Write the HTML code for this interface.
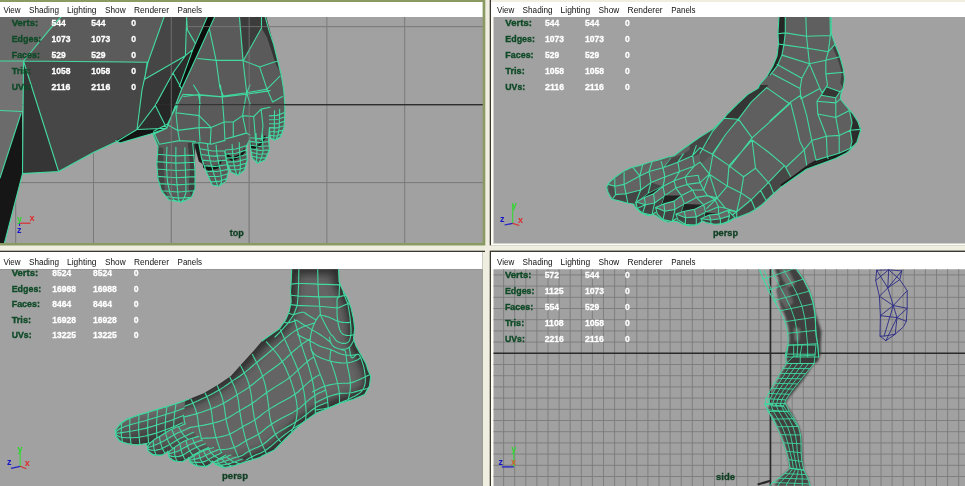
<!DOCTYPE html>
<html><head><meta charset="utf-8"><title>Maya viewports</title>
<style>
html,body{margin:0;padding:0;background:#efeee0;overflow:hidden}
body{width:965px;height:486px}
svg{display:block}
text{font-family:"Liberation Sans",sans-serif}
.m{font-size:9.5px;fill:#111}
.hl{font-size:9.6px;font-weight:bold;fill:#0e4a26;stroke:#0e4a26;stroke-width:0.35}
.hv{font-size:9.6px;font-weight:bold;fill:#fff;stroke:#fff;stroke-width:0.3}
.vl{font-size:9.2px;font-weight:bold;fill:#0f3f22;stroke:#0f3f22;stroke-width:0.3}
.g1{stroke:#7a7a7a;stroke-width:1}
.g2{stroke:#7c7c7c;stroke-width:0.9}
.w{fill:none;stroke:#41d9a0;stroke-width:1.1;stroke-linejoin:round;stroke-linecap:round}
.ax{font-size:9px;font-weight:bold}
</style></head><body>
<svg width="965" height="486" viewBox="0 0 965 486">
<rect width="965" height="486" fill="#efeee0"/>
<rect x="-3" y="0" width="488.3" height="245.5" fill="#8a9a62"/>
<rect x="0" y="2" width="482.6" height="15" fill="#fff"/>
<svg x="0" y="17" width="482.6" height="226" viewBox="0 17 482.6 226">
<rect x="0" y="17" width="483" height="226" fill="#a1a1a1"/>
<line x1="15.7" y1="17" x2="15.7" y2="243" class="g1"/>
<line x1="93.5" y1="17" x2="93.5" y2="243" class="g1"/>
<line x1="171.3" y1="17" x2="171.3" y2="243" class="g1"/>
<line x1="249.1" y1="17" x2="249.1" y2="243" class="g1"/>
<line x1="326.9" y1="17" x2="326.9" y2="243" class="g1"/>
<line x1="404.7" y1="17" x2="404.7" y2="243" class="g1"/>
<line x1="0" y1="26.6" x2="483" y2="26.6" class="g1"/>
<line x1="0" y1="182.6" x2="483" y2="182.6" class="g1"/>
<line x1="0" y1="104.6" x2="483" y2="104.6" stroke="#2e2e2e" stroke-width="1.4"/>
<polygon points="0,16 62,16 23.5,61 0,61" fill="#6a6a6a" />
<polygon points="62,16 164.4,16 147.2,62 23.5,61" fill="#5b5b5b" />
<polygon points="0,61 23.5,61 22.5,111.5 0,110.5" fill="#737373" />
<polygon points="0,110.5 22,111.5 21,113.5 0,178" fill="#6b6b6b" />
<polygon points="22,112 22.5,173.6 4.5,243 0,243 0,178 21,113.5" fill="#161616" />
<polygon points="23.5,61 58.6,171.5 22.5,173.6" fill="#353535" />
<polygon points="23.5,61 148,62.2 142,90 137,129.5 117.3,141.2 93.8,152.3 58.6,171.5" fill="#474747" />
<polygon points="164.4,16 186.7,16 185.4,55.7 144.7,79.2 147.2,62" fill="#464646" />
<polygon points="144.7,79.2 185.4,55.7 173,73 154.6,106.4 156,118 137,129.5 142,90" fill="#3a3a3a" />
<polygon points="186.7,16 207.7,16 192.8,49.6 185.4,55.7" fill="#505050" />
<polygon points="185.4,55.7 192.8,49.6 179.3,86.6 173,73" fill="#2c2c2c" />
<polygon points="173,73 181.7,89 166.7,128.3 155.6,106" fill="#262626" />
<polygon points="137,129.5 155.6,106 166.7,128.3" fill="#2e2e2e" />
<polygon points="116,140.6 137,129.5 166.7,128.3 150.6,134 119.8,143" fill="#141414" />
<polygon points="215,16 195.3,59.4 181.7,89 166.7,128.3 153,134.4 158,146.8 156.8,164 158,178.9 161.7,191.2 169,199.9 181.5,202.3 191.4,197.4 195,188.8 195,171.5 193.8,154.2 192.6,143 198.8,143 201.2,156.7 206.2,171.5 212.3,185 218.5,186.3 226,181.4 228.4,171.5 224.7,151.7 225,151.4 226.7,161.6 231,171.9 237.8,175.3 244.7,170 247.2,160 246.4,146.2 249.8,139.4 250.6,148 252.3,158.2 257.5,163.3 265,160 269.4,149.7 268.6,139.4 269.4,128 270.3,137.7 274.5,140.3 280.5,136.8 284,127.5 284.8,115.5 284.8,103.9 283.6,89 281.1,74.3 277.4,59.4 273.7,44.6 268.8,29.8 265,16" fill="#5a5a5a" />
<polygon points="207.7,16 215,16 195.3,59.4 181.7,89 179.3,86.6 192.8,49.6" fill="#0e0e0e" />
<polygon points="240.2,15.9 261.5,15.9 261.5,28 243.9,59.4" fill="#3c3c3c" />
<polygon points="261.5,15.9 266.1,15.9 270.7,33.5 275.4,52 279.1,70.6 275.4,63.1 267,37.2 261.5,28" fill="#343434" />
<polygon points="193.8,143.1 198.8,143.1 202.5,164.1 198.8,161.6" fill="#1c1c1c" />
<polygon points="202.5,162.8 208.6,167 218.5,164.6 221.5,159.1 221.5,162.1 218,168.5 208.6,171 203.2,167.8" fill="#151515" />
<polygon points="226.4,153 232.1,157.2 240.7,153.7 244.4,148 245.2,151.7 241.2,157.2 232.1,161.1 227.2,157.9" fill="#151515" />
<polygon points="249.8,139.7 252.3,146.2 258.3,144.5 265.1,135.1 266,137.7 259.2,147.1 252.3,149.3 250.1,146.2" fill="#151515" />
<polygon points="187.7,143.1 195.1,143.1 195.1,188.8 191.4,197.4 188.9,188.8 190.1,164.1" fill="#3e3e3e" />
<polygon points="158,146.8 163,148 164.7,188.8 169.1,199.9 161.7,191.2 158,178.9 156.8,164.1" fill="#444" />
<path class="w" d="M0 61 L23.5 61 L148 62.2M62 16 L55.5 22.4 L23.5 61 L58.6 171.5M23.5 61 L22.5 173.6 L4.5 243M0 110.5 L22 111.5M21 113.5 L0 178M22.5 173.6 L58.6 171.5 L93.8 152.3 L117.3 141.2 L137 129.5 L142 90 L148 62.2 L164.4 16M186.7 16 L185.4 55.7 L144.7 79.2M144.7 79.2 L147.2 62M207.7 16 L192.8 49.6 L185.4 55.7 L173 73 L154.6 106.4 L137 129.5M192.8 49.6 L179.3 86.6M173 73 L181.7 89M155.6 106 L166.7 128.3 L137 129.5M116 140.6 L119.8 143 L150.6 134 L166.7 128.3M215 16 L195.3 59.4 L181.7 89 L166.7 128.3 L153 134.4 L158 146.8 L156.8 164 L158 178.9 L161.7 191.2 L169 199.9 L181.5 202.3 L191.4 197.4 L195 188.8 L195 171.5 L193.8 154.2 L192.6 143 L198.8 143 L201.2 156.7 L206.2 171.5 L212.3 185 L218.5 186.3 L226 181.4 L228.4 171.5 L224.7 151.7 L225 151.4 L226.7 161.6 L231 171.9 L237.8 175.3 L244.7 170 L247.2 160 L246.4 146.2 L249.8 139.4 L250.6 148 L252.3 158.2 L257.5 163.3 L265 160 L269.4 149.7 L268.6 139.4 L269.4 128 L270.3 137.7 L274.5 140.3 L280.5 136.8 L284 127.5 L284.8 115.5 L284.8 103.9 L283.6 89 L281.1 74.3 L277.4 59.4 L273.7 44.6 L268.8 29.8 L265 16 L215 16M186.5 15.9 L187.4 29.8 L194.8 42.8M187.4 29.8 L193.9 40.9M209.6 29.8 L216.1 60.4 L219.8 87.2 L223.5 96.5M197.6 58.5 L216.1 60.4 L243 60.4 L259.6 66.9 L273.5 62.2 L277.2 61.3M239.3 15.9 L243 60.4 L246.7 92.8 L250.4 105M261.5 15.9 L261.5 28 L243.9 59.4M259.6 66.9 L267 89.1 L246.7 92.8 L219.8 96.5 L198.5 94.6 L183.7 96.5M267 89.1 L280 76.1M267 89.1 L272.6 102 L282.4 96.5M198.5 94.6 L200.4 105M183.3 94.3 L200 95.2 L222.2 97 L246.3 94.3 L270 90.6M183.3 94.3 L177.8 103.5 L172.2 114.6 L167.6 123.9 L153.7 131.3M175.9 112.8 L199.1 115.6 L211.1 127.6 L224.1 122 L233.3 122 L242.6 115.6 L253.7 116.5 L261.1 109.1 L270 107.2M167.6 124.8 L177.8 130.4 L199.1 127.6 L211.1 127.6M177.8 130.4 L179.6 140.6M153.7 132.2 L159.3 144.3 L179.6 140.6 L195.4 141.5M199.1 142.4 L211.1 144.3 L224.1 140.6M225.9 138.7 L233.3 136.9 L246.3 133.1 L250 135M200 95.2 L199.1 115.6 L199.1 127.6 L200 140.6M222.2 97 L224.1 122 L225 140.6M246.3 94.3 L242.6 115.6 L246.3 133.1M211.1 127.6 L210.2 144.3M233.3 122 L233.3 136.9M253.7 116.5 L255.6 140.6M261.1 109.1 L263 125.7 L261.1 140.6M177.8 103.5 L175.9 112.8 L177.8 130.4M193.5 85 L200 95.2M220.4 85 L222.2 97M250 85 L246.3 94.3M157.484 154.202 L175.824 155.877 L194.165 155.153M156.967 161.604 L175.749 163.155 L194.531 162.306M157.203 169.002 L176.049 170.43 L194.896 169.459M157.798 176.398 L176.399 177.708 L195 176.619M159.414 183.601 L177.207 184.891 L195 183.781M161.552 190.707 L177.862 191.942 L194.172 190.777M166.138 196.49 L178.773 198.137 L191.407 197.384M166.95 147.1 L166.5 159.756 L166.648 170.91 L167.605 182.014 L169.801 192.772 L173.75 199.925 L178.5 201.5M175.9 147.4 L175.785 159.962 L176.069 171.021 L176.737 182.052 L177.851 192.783 L178.5 199.95 L180 201.5M184.85 147.7 L185.07 160.167 L185.489 171.133 L185.868 182.091 L185.901 192.794 L183.25 199.975 L181.5 201.5M199.807 148.747 L212.442 150.934 L225.078 150.72M200.814 154.495 L213.134 156.167 L225.455 155.44M202.351 160.107 L214.309 161.305 L226.268 160.103M204.218 165.635 L215.678 166.396 L227.138 164.757M206.086 171.162 L217.048 171.487 L228.009 169.411M208.456 176.492 L218.12 176.465 L227.785 174.037M210.858 181.81 L218.764 181.424 L226.669 178.639M207.433 144 L208.645 153.715 L210.385 161.815 L212.718 169.775 L214.997 177.58 L216.867 183.8 L217.5 185.5M216.067 145 L216.959 154.195 L218.343 161.802 L220.172 169.319 L221.347 176.743 L221.433 182.6 L219.5 185.5M225.29 150.06 L235.894 148.951 L246.499 145.443M225.655 154.112 L236.126 153.198 L246.597 149.885M226.218 158.143 L236.538 157.432 L246.859 154.321M226.923 162.135 L237.024 161.646 L247.125 158.757M228.491 165.89 L237.458 165.696 L246.424 163.102M230.059 169.646 L237.703 169.73 L245.347 167.413M232.133 144.333 L232.432 151.361 L232.931 156.869 L233.612 162.349 L234.661 167.565 L235.567 171.267 L236.8 174.5M239.267 142.667 L239.481 149.862 L239.847 155.547 L240.363 161.214 L240.392 166.687 L240.133 170.633 L238.8 174.5M249.964 137.688 L259.366 138.658 L268.769 137.227M250.128 141.376 L259.533 142.615 L268.938 141.454M250.365 145.06 L259.762 146.569 L269.16 145.678M250.722 148.732 L260.021 150.509 L269.321 149.885M251.329 152.374 L259.494 154.275 L267.659 153.776M251.936 156.015 L258.966 158.04 L265.997 157.666M256.067 133.667 L256.285 140.272 L256.529 145.376 L256.928 150.467 L256.73 155.384 L256.533 158.8 L257 162.5M262.333 133.333 L262.554 140.176 L262.799 145.517 L263.157 150.849 L261.962 155.874 L260.767 159.4 L259 162.5M269.4 115.9 L277.009 115.38 L284.617 112.459M269.4 119.801 L276.917 119.559 L284.434 116.918M269.4 123.701 L276.826 123.739 L284.251 121.377M269.4 127.601 L276.734 127.918 L284.068 125.835M269.723 131.486 L276.369 132.002 L283.015 130.117M270.084 135.37 L275.763 136.032 L281.443 134.294M274.533 110.667 L274.453 117.561 L274.372 122.955 L274.292 128.349 L274.075 133.645 L273.7 137.4 L274 139.5M279.667 109.333 L279.506 116.473 L279.345 122.113 L279.184 127.753 L278.325 133.216 L277.1 137.1 L276 139.5" />
<line x1="156" y1="104.6" x2="483" y2="104.6" stroke="#2e2e2e" stroke-width="1.4" opacity="0.85"/>
<line x1="171.3" y1="17" x2="171.3" y2="243" stroke="#808080" stroke-width="1" opacity="0.7"/>
<line x1="249.2" y1="17" x2="249.2" y2="243" stroke="#808080" stroke-width="1" opacity="0.7"/>
<line x1="186" y1="26.6" x2="483" y2="26.6" stroke="#808080" stroke-width="1" opacity="0.7"/>
</svg>
<rect x="489.7" y="0" width="475.3" height="245.6" fill="#3a3830"/>
<rect x="491" y="0" width="474" height="2" fill="#efeee0"/>
<rect x="491" y="2" width="474" height="243.6" fill="#fdfdf4"/>
<rect x="491" y="2" width="474" height="15" fill="#fff"/>
<svg x="493.5" y="17" width="471.5" height="226.5" viewBox="493.5 17 471.5 226.5">
<rect x="491" y="17" width="474" height="227" fill="#a1a1a1"/>
<defs><clipPath id="clipTR"><polygon points="779,16 778,33 778.5,44 777,56 772.8,66.2 766.8,76.5 760,84.2 758,88.4 747.8,94.4 737.6,103.8 727.3,114 723.9,118.3 713.7,128.6 700,137 684,148.3 674,155.7 667.9,157 658.6,160 649.4,162.3 640,165.4 630.9,167.7 623,171.6 615.4,177 609.3,182.4 606.5,187 607.7,191.7 610,196.3 612.3,199.4 620,201 627.8,203.2 633.2,204 636.3,208.6 641.7,213.3 647.8,215.6 653.2,214.5 656.3,216 661.7,219.8 667.9,222.3 673,221.3 677,221.6 683,224.4 690,226 698,224.4 702.5,221 707,222.9 715,224.4 724,223.6 730,221.3 734,218.2 739.5,216.7 750,212.8 754.6,210 762,205 771.9,195.2 781.7,186.6 794,178 806.4,169.3 816.3,165.6 826,162 836,158.2 848.4,152 857,142 860.7,129.8 858,122 853,114 846,106 840.3,99 841,93.6 843.3,87.6 844.5,79 843.3,68.8 840,56.8 835,44 831.4,33.8 831,16"/></clipPath></defs>
<polygon points="779,16 778,33 778.5,44 777,56 772.8,66.2 766.8,76.5 760,84.2 758,88.4 747.8,94.4 737.6,103.8 727.3,114 723.9,118.3 713.7,128.6 700,137 684,148.3 674,155.7 667.9,157 658.6,160 649.4,162.3 640,165.4 630.9,167.7 623,171.6 615.4,177 609.3,182.4 606.5,187 607.7,191.7 610,196.3 612.3,199.4 620,201 627.8,203.2 633.2,204 636.3,208.6 641.7,213.3 647.8,215.6 653.2,214.5 656.3,216 661.7,219.8 667.9,222.3 673,221.3 677,221.6 683,224.4 690,226 698,224.4 702.5,221 707,222.9 715,224.4 724,223.6 730,221.3 734,218.2 739.5,216.7 750,212.8 754.6,210 762,205 771.9,195.2 781.7,186.6 794,178 806.4,169.3 816.3,165.6 826,162 836,158.2 848.4,152 857,142 860.7,129.8 858,122 853,114 846,106 840.3,99 841,93.6 843.3,87.6 844.5,79 843.3,68.8 840,56.8 835,44 831.4,33.8 831,16" fill="#5f5f5f" />
<g clip-path="url(#clipTR)">
<polygon points="777.1,15 777.9,33.8 778.4,44 777.1,56 772.8,66.2 766.8,76.5 770.2,74.8 777.1,66.2 781.9,55.1 783.9,44.9 785.3,32.9 785.3,15" fill="#262626" />
<polygon points="758.9,85 758.1,88.4 747.8,94.4 737.6,103.8 727.3,114 723.9,118.3 738.4,119.2 751.2,102.1 766.6,87.6 768.3,85" fill="#353535" />
<polygon points="723.9,118.3 713.7,128.6 700,137.1 689.8,144.8 689.8,158.4 700,153.3 712.8,131.1" fill="#454545" />
<polygon points="723.9,118.3 712.8,131.1 700,153.3 700,165.3 712.8,153.3 725.6,134.5 738.4,119.2" fill="#545454" />
<polygon points="826.4,86.7 840,91.8 835.8,97.8 821.2,95.2" fill="#363636" />
<polygon points="835.1,44 839.9,56.8 843.3,68.8 844.5,79 843.3,87.6 840.3,83.3 841.6,73.1 839.4,64.5 836,55.1 832.6,47.5" fill="#404040" />
<polygon points="841.7,83.3 845.1,91.8 850.3,103.8 855.4,114 859.7,124.3 862.2,131.1 859.7,137.9 855.4,144.8 850.3,148.2 852,141.4 850.3,130.3 852,122.6 849.4,110.6 845.1,95.2" fill="#3a3a3a" />
<polygon points="852,122.6 855.4,114 859.7,124.3 862.2,131.1 859.7,137.9 855.4,144.8 850.3,148.2 852,141.4 850.3,130.3" fill="#2c2c2c" />
<polygon points="862.2,136.2 855.4,144.8 846.9,151.6 838.3,155.9 828.1,158.4 817.8,161.9 809.3,165.3 804.2,168 795.6,175.5 806.7,165.3 816.1,160.1 827.2,156.7 839.2,153.3 850.3,148.2 855.4,144.8" fill="#1e1e1e" />
<polygon points="784.5,165.6 790.5,176.2 773.8,193.8 765.8,200.1 755,208.7 736.7,217.7 725.6,225.4 725.6,220.3 736.7,211.7 751.2,199.8 768.3,182.7" fill="#474747" />
<polygon points="781.7,186.6 794.1,178 806.4,169.3 816.3,165.6 826.2,161.9 836,158.2 848.4,152 844.7,152 832.3,157 822.5,160.4 812.6,163.9 804,167.8 792.8,176 780.5,184.6" fill="#1c1c1c" />
<polygon points="711.1,140 703.7,147.4 692.6,155.7 677.8,162.2 663,167.8 661.1,161.3 670.4,158.5 683.3,153.9 696.3,145.6 703.7,140" fill="#474747" />
<path class="w" d="M785.3 15.9 L785.3 32.9 L783.9 44.9 L781.9 55.1 L777.1 66.2 L770.2 74.8M805.8 15.9 L806.5 36.3 L807.8 48.3 L809.5 63.7 L801.8 78.2 L800.1 88.4 L801 98.7M809.5 63.7 L819.8 88.4 L822.3 92.7M819.8 88.4 L801 98.7M830 15.9 L830.4 35.5 L828.3 51.7 L825.8 60.3 L825.8 73.9 L827.5 85 L822.3 92.7M777.9 33.8 L785.3 32.9 L806.5 36.3 L830.4 35.5M778.4 44 L783.9 44.9 L807.8 48.3 L828.3 51.7 L835.1 44.4M781.9 55.1 L809.5 63.7 L825.8 60.3 L839.9 56.8M777.1 64.5 L801.8 78.2M772.8 73.9 L800.1 88.4M825.8 73.9 L843.7 72.2M826.4 86.7 L821.2 95.2 L817 101.2 L817.8 114 L826.4 136.2 L827.2 156.7 L828.1 158.4M826.4 86.7 L840 91.8 L835.8 97.8 L821.2 95.2M840 91.8 L843.8 88.4M817 101.2 L835.8 102.9 L835.8 97.8M835.8 102.9 L845.1 95.2M817.8 114 L835.8 117.5 L835.8 102.9M835.8 117.5 L849.4 110.6M835.8 117.5 L839.2 135.4 L839.2 153.3M811.8 140.5 L826.4 136.2 L839.2 135.4 L850.3 130.3 L860.5 129.4M845.1 95.2 L849.4 110.6 L852 122.6 L850.3 130.3 L852 141.4 L850.3 148.2M800.7 95.2 L806.7 115.7 L811.8 140.5 L816.1 160.1M800.7 95.2 L790.5 102.1 L770 120.9M790.5 102.1 L795.6 122.6 L799.9 141.4 L804.2 149.9 L806.7 165.3M811.8 140.5 L804.2 149.9 L786.2 167M816.1 160.1 L827.2 156.7 L839.2 153.3 L850.3 148.2 L855.4 144.8M766.6 87.6 L751.2 102.1 L738.4 119.2 L725.6 134.5 L712.8 153.3M738.4 119.2 L723.9 118.3M723.9 118.3 L712.8 131.1 L700 153.3M738.4 119.2 L752.1 137.9M766.6 87.6 L789.7 103.8M789.7 103.8 L752.1 137.9M752.1 137.9 L729 168M752.1 140 L755.5 168.2 L743.6 176.7 L729 165.6 L752.1 140M752.1 140 L768.3 152 L784.5 165.6 L790.5 176.2M755.5 168.2 L770 184.4 L773.8 193.8M784.5 165.6 L768.3 182.7 L751.2 199.8 L736.7 211.7 L725.6 220.3M760.6 190.4 L765.8 200.1M751.2 199.8 L755 208.7M736.7 211.7 L736.7 217.7M743.6 176.7 L741 192.9 L751.2 199.8M741 192.9 L736.7 211.7M729 165.6 L727.3 186.1 L741 192.9M727.3 186.1 L717.1 198.1 L725.6 208.3 L736.7 211.7M614.8 186.3 L624.1 184.4 L639.8 176.1 L649.1 171.5 L663 167.8 L677.8 162.2 L692.6 155.7 L700 147.6M615.7 194.6 L625.9 193.7 L640.7 190 L650.9 182.6 L664.8 177 L679.6 171.5 L694.4 165.9 L700 162.2M663 186.3 L674.1 180.7 L685.2 177 L698.1 175.2M664.8 195.6 L675.9 188.1 L687 184.4 L700 182.6M681.5 195.6 L692.6 190 L703.7 190 L709.4 174.3M684.3 203.9 L696.3 197.4 L707.4 195.6 L717 198M703.7 204.8 L714.8 199.3 L717 198M705.6 212.2 L718.5 206.7 L725.6 208.3M718.5 214.1 L727.8 210.4 L736.7 211.7M670.4 158.5 L663 167.8 L664.8 177 L663 186.3M683.3 153.9 L677.8 162.2 L679.6 171.5 L674.1 180.7 L675.9 188.1 L681.5 195.6M696.3 145.6 L692.6 155.7 L694.4 165.9 L685.2 177 L687 184.4 L692.6 190 L696.3 197.4 L703.7 204.8M698.1 175.2 L700 182.6 L703.7 190 L707.4 195.6 L714.8 199.3 L718.5 206.7 L718.5 214.1M729 165.6 L712.8 154.5 L700 147.7M712.8 154.5 L722.2 140M712.8 154.5 L709.4 174.2 L727.3 186.1M700 162.2 L709.4 174.2 L700 182.7M709.4 174.2 L717.1 198.1 L706.8 208.3" />
<polygon points="670.4,158.5 661.1,161.3 651.9,162.2 642.6,165 633.3,167.8 624.1,172.4 614.8,178.9 608.3,184.4 608.9,191.9 613,198.3 618.5,201.1 627.8,203 635.2,203.9 648.1,193.7 663,186.3 664.8,177 663,167.8" fill="#636363" />
<polygon points="615.7,194.6 625.9,193.7 640.7,190 650.9,182.6 663,186.3 648.1,193.7 635.2,203.9 627.8,203 618.5,201.1 613,198.3" fill="#454545" />
<polygon points="608.3,184.4 614.8,186.3 615.7,194.6 613,198.3 608.9,191.9" fill="#4c4c4c" />
<polygon points="639.8,176.1 649.1,171.5 650.9,182.6 640.7,190" fill="#585858" />
<path class="w" d="M614.8 186.3 L624.1 184.4 L639.8 176.1 L649.1 171.5 L663 167.8M615.7 194.6 L625.9 193.7 L640.7 190 L650.9 182.6 L664.8 177M624.1 172.4 L624.1 184.4 L625.9 193.7 L627.8 203M633.3 167.8 L639.8 176.1 L640.7 190 L635.2 203.9M642.6 165 L639.8 176.1M651.9 162.2 L649.1 171.5 L650.9 182.6 L648.1 193.7 L635.2 203.9M614.8 178.9 L614.8 186.3 L615.7 194.6 L613 198.3M608.3 184.4 L614.8 186.3M661.1 161.3 L663 167.8 L664.8 177 L663 186.3 L648.1 193.7" />
<polygon points="635.2,203.9 648.1,193.7 663,186.3 653.7,193.7 644.4,197.4 636.1,202" fill="#222" />
<polygon points="636.1,202 644.4,197.4 653.7,193.7 663,186.3 664.8,195.6 661.1,206.7 655.6,212.2 651.9,215 642.6,213.1 637,208.5" fill="#444" />
<polygon points="636.1,202 644.4,197.4 653.7,193.7 663,186.3 664.8,195.6 654.6,203 645.4,204.8" fill="#666" />
<path class="w" d="M636.1 202 L644.4 197.4 L653.7 193.7 L663 186.3 L664.8 195.6 L661.1 206.7 L655.6 212.2 L651.9 215 L642.6 213.1 L637 208.5 L636.1 202M644.4 197.4 L645.4 204.8 L642.6 213.1M653.7 193.7 L654.6 203 L651.9 215M636.1 202 L645.4 204.8 L654.6 203 L664.8 195.6M637 208.5 L645.4 204.8" />
<polygon points="655.6,212.2 661.1,206.7 664.8,195.6 681.5,195.6 674.1,201.1 663.9,203.9 655.6,207.6" fill="#222" />
<polygon points="655.6,207.6 663.9,203.9 674.1,201.1 681.5,195.6 684.3,203.9 681.5,212.2 675.9,218.7 672.2,221.5 663,219.6 657.4,214.1" fill="#444" />
<polygon points="655.6,207.6 663.9,203.9 674.1,201.1 681.5,195.6 684.3,203.9 675,209.4 664.8,211.3" fill="#666" />
<path class="w" d="M655.6 207.6 L663.9 203.9 L674.1 201.1 L681.5 195.6 L684.3 203.9 L681.5 212.2 L675.9 218.7 L672.2 221.5 L663 219.6 L657.4 214.1 L655.6 207.6M663.9 203.9 L664.8 211.3 L663 219.6M674.1 201.1 L675 209.4 L672.2 221.5M655.6 207.6 L664.8 211.3 L675 209.4 L684.3 203.9" />
<polygon points="675.9,218.7 681.5,212.2 684.3,203.9 703.7,204.8 694.4,209.4 684.3,211.3 675.9,214.1" fill="#222" />
<polygon points="675.9,214.1 684.3,211.3 694.4,209.4 703.7,204.8 705.6,212.2 703.7,219.6 700.9,222.4 696.3,225.2 685.2,224.3 677.8,219.6" fill="#444" />
<polygon points="675.9,214.1 684.3,211.3 694.4,209.4 703.7,204.8 705.6,212.2 696.3,216.9 685.6,217.8" fill="#666" />
<path class="w" d="M675.9 214.1 L684.3 211.3 L694.4 209.4 L703.7 204.8 L705.6 212.2 L703.7 219.6 L700.9 222.4 L696.3 225.2 L685.2 224.3 L677.8 219.6 L675.9 214.1M684.3 211.3 L685.6 217.8 L685.2 224.3M694.4 209.4 L696.3 216.9 L696.3 225.2M675.9 214.1 L685.6 217.8 L696.3 216.9 L705.6 212.2" />
<polygon points="700.9,222.4 703.7,219.6 705.6,212.2 718.5,214.1 709.3,215 700.9,218.7" fill="#222" />
<polygon points="700.9,218.7 709.3,215 718.5,214.1 727.8,210.4 735.2,217.8 727.8,221.5 720.4,224.3 711.1,225.2 702.8,223.3" fill="#444" />
<polygon points="700.9,218.7 709.3,215 718.5,214.1 727.8,210.4 729.6,215.9 720.4,218.7 710.7,220" fill="#666" />
<path class="w" d="M700.9 218.7 L709.3 215 L718.5 214.1 L727.8 210.4 L735.2 217.8 L727.8 221.5 L720.4 224.3 L711.1 225.2 L702.8 223.3 L700.9 218.7M709.3 215 L710.7 220 L711.1 225.2M718.5 214.1 L720.4 218.7 L720.4 224.3M700.9 218.7 L710.7 220 L720.4 218.7 L729.6 215.9M727.8 210.4 L729.6 215.9 L727.8 221.5" />
</g>
<path class="w" d="M779 16 L778 33 L778.5 44 L777 56 L772.8 66.2 L766.8 76.5 L760 84.2 L758 88.4 L747.8 94.4 L737.6 103.8 L727.3 114 L723.9 118.3 L713.7 128.6 L700 137 L684 148.3 L674 155.7 L667.9 157 L658.6 160 L649.4 162.3 L640 165.4 L630.9 167.7 L623 171.6 L615.4 177 L609.3 182.4 L606.5 187 L607.7 191.7 L610 196.3 L612.3 199.4 L620 201 L627.8 203.2 L633.2 204 L636.3 208.6 L641.7 213.3 L647.8 215.6 L653.2 214.5 L656.3 216 L661.7 219.8 L667.9 222.3 L673 221.3 L677 221.6 L683 224.4 L690 226 L698 224.4 L702.5 221 L707 222.9 L715 224.4 L724 223.6 L730 221.3 L734 218.2 L739.5 216.7 L750 212.8 L754.6 210 L762 205 L771.9 195.2 L781.7 186.6 L794 178 L806.4 169.3 L816.3 165.6 L826 162 L836 158.2 L848.4 152 L857 142 L860.7 129.8 L858 122 L853 114 L846 106 L840.3 99 L841 93.6 L843.3 87.6 L844.5 79 L843.3 68.8 L840 56.8 L835 44 L831.4 33.8 L831 16 L779 16" />
</svg>
<rect x="485.3" y="245.6" width="480" height="5" fill="#efeee0"/>
<rect x="0" y="250.7" width="485" height="235.4" fill="#3a3830"/>
<rect x="482.5" y="252" width="3" height="234" fill="#efeee0"/>
<rect x="0" y="252" width="482.5" height="17.3" fill="#fff"/>
<svg x="0" y="269.3" width="482.5" height="216.7" viewBox="0 269.3 482.5 216.7">
<rect x="0" y="269" width="483" height="217" fill="#a1a1a1"/>
<defs><clipPath id="clipBL"><polygon points="291.7,268 291.2,281.8 290.5,291.7 291.2,301.6 289.3,311.4 285.6,320 279.4,328.7 270.7,334.9 262,341 253.5,351 242.3,363.3 230.9,375.9 218.5,384.5 203.7,393.2 188.9,399.3 174,404.3 161.7,408 149.4,411.7 137,415.4 127.2,419 119.8,424 115.3,430.2 116,436.4 119.8,441.3 127.2,443.8 137,445 145.7,443.8 146.9,445 148.1,451.2 153,454.9 161.7,455.4 166.7,452.4 167.9,451.2 169.1,457.4 174,461 182.7,461.8 187.7,458.6 188.9,457.4 190.1,462.3 196.3,466 206.2,466.7 211.1,463.5 212.3,461 216,464.8 223.5,467.7 233.3,466 240.7,463.5 248.1,461 260,457.4 262,456 274.4,450 284.3,440 294.2,430.2 304,421.6 316.4,413 328.8,408 341,403 353.5,399.3 364.6,394.4 369.5,385.8 370.7,375.9 368.3,371 365.8,363.3 360.9,354.7 356,346 353.5,338.6 354.7,328.7 353.5,318.9 351,307.7 347.3,297.9 342.3,289.2 339.1,281.8 338.6,268"/></clipPath><filter id="blBL" x="-20%" y="-20%" width="140%" height="140%"><feGaussianBlur stdDeviation="4"/></filter></defs>
<g clip-path="url(#clipBL)">
<polygon points="291.7,268 291.2,281.8 290.5,291.7 291.2,301.6 289.3,311.4 285.6,320 279.4,328.7 270.7,334.9 262,341 253.5,351 242.3,363.3 230.9,375.9 218.5,384.5 203.7,393.2 188.9,399.3 174,404.3 161.7,408 149.4,411.7 137,415.4 127.2,419 119.8,424 115.3,430.2 116,436.4 119.8,441.3 127.2,443.8 137,445 145.7,443.8 146.9,445 148.1,451.2 153,454.9 161.7,455.4 166.7,452.4 167.9,451.2 169.1,457.4 174,461 182.7,461.8 187.7,458.6 188.9,457.4 190.1,462.3 196.3,466 206.2,466.7 211.1,463.5 212.3,461 216,464.8 223.5,467.7 233.3,466 240.7,463.5 248.1,461 260,457.4 262,456 274.4,450 284.3,440 294.2,430.2 304,421.6 316.4,413 328.8,408 341,403 353.5,399.3 364.6,394.4 369.5,385.8 370.7,375.9 368.3,371 365.8,363.3 360.9,354.7 356,346 353.5,338.6 354.7,328.7 353.5,318.9 351,307.7 347.3,297.9 342.3,289.2 339.1,281.8 338.6,268" fill="#646464" />
<polygon points="291.7,268 291.2,281.8 290.5,291.7 291.2,301.6 289.3,311.4 285.6,320 279.4,328.7 270.7,334.9 262,341 253.5,351 242.3,363.3 230.9,375.9 218.5,384.5 203.7,393.2 188.9,399.3 174,404.3 161.7,408 149.4,411.7 137,415.4 127.2,419 119.8,424 115.3,430.2 116,436.4 119.8,441.3 127.2,443.8 137,445 145.7,443.8 146.9,445 148.1,451.2 153,454.9 161.7,455.4 166.7,452.4 167.9,451.2 169.1,457.4 174,461 182.7,461.8 187.7,458.6 188.9,457.4 190.1,462.3 196.3,466 206.2,466.7 211.1,463.5 212.3,461 216,464.8 223.5,467.7 233.3,466 240.7,463.5 248.1,461 260,457.4 262,456 274.4,450 284.3,440 294.2,430.2 304,421.6 316.4,413 328.8,408 341,403 353.5,399.3 364.6,394.4 369.5,385.8 370.7,375.9 368.3,371 365.8,363.3 360.9,354.7 356,346 353.5,338.6 354.7,328.7 353.5,318.9 351,307.7 347.3,297.9 342.3,289.2 339.1,281.8 338.6,268" fill="none" stroke="#2b2b2b" stroke-width="12" filter="url(#blBL)"/>
<polygon points="137,445 145.7,443.8 166.7,452.4 187.7,458.6 211.1,463.5 238.3,464.8 238.3,474.6 134.6,464.8" fill="#2b2b2b" opacity="0.6" filter="url(#blBL)"/>
</g>
<g clip-path="url(#clipBL)">
<path class="w" d="M298.9 267.9 L298.6 284.1 L298.1 296 L297.2 305.4 L293.8 314.8 L287.8 323.4 L280.1 331.9 L275 337M317.7 267.9 L318 284.1 L318.6 296.9 L319.1 298.8 L319.8 307.4 L320.4 314.2M339 267.9 L339.6 284.1 L339 296.9 L337 298.8 L337 299.3 L337 300.4 L337 302 L337 304.2 L337 306.3 L337 308.5 L337 310.6 L337 312.8 L337.1 314.9 L337.2 317.1 L337.5 319.3 L337.8 321.4 L338.2 323.5 L338.6 325.3 L339 327 L339.4 328.6 L339.9 330 L340.5 331.2 L341 332.3 L341.7 333.2 L342.6 334 L343.7 334.6 L345.1 335.1 L346.9 335.4 L348.4 335.5 L349.9 335.5 L351.2 335.4 L352.3 335.1 L353.2 334.8 L353.8 334.7 L354.1 334.6M343.7 284.1 L343.3 292.6 L346.7 301.2 L347.5 302.5 L347.6 303.1 L347.9 304.3 L348.2 306.2 L348.7 308.6 L349.1 311.1 L349.5 313.5 L349.9 316 L350.1 318.5 L350.4 321 L350.6 323.4 L350.8 325.9 L351 328.4 L351 330.6 L351 332.4 L351 333.9 L350.8 335.2 L350.6 336.4 L350.3 337.7 L349.9 339.1 L349.5 340.5 L348.7 341.6 L347.6 342.5 L346.3 343.1 L344.5 343.4 L342.9 343.4 L341.3 343.1 L339.7 342.6 L338.1 341.9 L336.8 341 L335.7 340.1 L334.9 339.1 L334.2 338 L333.6 337.1 L333 336.3 L332.4 335.7 L331.8 335.3 L331.4 334.9 L331 334.7 L330.9 334.6M354.3 339.5 L354.2 339.6 L354.1 339.9 L353.9 340.2 L353.6 340.7 L353.1 341.5 L352.5 342.5 L351.7 343.9 L350.8 345.6 L349.6 347 L348.2 348 L346.6 348.8 L344.8 349.3 L342.8 349.4 L340.8 349.3 L338.7 348.8 L336.6 348.1 L334.7 347.2 L333.3 346.2 L332.1 345.1 L331.4 343.8 L330.7 342.6 L330.3 341.4 L330 340.1 L329.8 338.9 L329.7 337.9 L329.6 337.3 L329.6 337M291.7 284.1 L298.6 283.2 L318 284.1 L339.6 284.9 L343.7 284.1M291.2 295.2 L298.1 296 L318.6 296.9 L339 296.9 L345 295.2 L348.1 295.7M290.4 304.6 L297.2 305.4 L319.1 306.3 L337.9 308 L347.6 303.7 L351.3 303.7M287.8 313.1 L288.2 313.2 L288.9 313.4 L290.1 313.7 L291.6 314.2 L293.3 314.3 L295.2 314.1 L297.3 313.5 L299.7 312.7 L301.7 312.2 L303.4 312.2 L304.8 312.7 L305.8 313.5 L307.1 314.5 L308.7 315.5 L310.6 316.7 L312.8 317.9 L314.4 318.9 L315.5 319.5 L316 319.8M282.7 321.7 L283 321.8 L283.7 322 L284.6 322.3 L285.9 322.8 L287.4 322.9 L289.2 322.6 L291.3 322.1 L293.7 321.2 L295.5 320.6 L296.7 320.3 L297.3 320.3 L297.4 320.6 L298.3 321.3 L300.1 322.5 L302.8 324.2 L306.4 326.4 L309.7 328.4 L312.8 330.2 L315.6 331.9 L318.3 333.5 L320.7 335 L323 336.6 L325.2 338.1 L327.2 339.7 L328.7 340.8 L329.7 341.6 L330.2 342M320.4 314.8 L321 315 L322.1 315.3 L323.8 315.7 L326.2 316.4 L328.4 317.1 L330.7 317.9 L332.9 318.9 L335 320 L337.2 320.9 L339.4 321.6 L341.5 322.1 L343.7 322.4 L345.5 322.5 L347.1 322.6 L348.3 322.6 L349.2 322.4 L349.9 322.3 L350.4 322.2 L350.6 322.2M320.4 314.8 L320.7 315.4 L321.3 316.7 L322.2 318.5 L323.5 321 L324.7 323.5 L326 325.9 L327.4 328.4 L328.8 330.9 L329.9 332.7 L330.5 334 L330.9 334.6M297.5 334.6 L298.3 335 L299.8 335.7 L302.1 336.9 L305.2 338.4 L308.3 339.9 L311.2 341.5 L314.1 343 L316.8 344.6 L319.5 345.9 L322.2 347 L324.7 347.8 L327.2 348.5 L329.7 349.2 L332.1 350.2 L334.6 351.2 L337 352.5 L339.4 353.5 L341.7 354.2 L344 354.8 L346.1 355.1 L348.3 355.3 L350.5 355.3 L352.6 355.1 L354.8 354.8 L356.4 354.5 L357.5 354.4 L358 354.3M311.1 350 L311.4 350.4 L312 351.2 L312.9 352.3 L314.2 353.9 L316 355.4 L318.5 356.8 L321.6 358.3 L325.3 359.6 L329.1 360.8 L333 361.7 L336.9 362.4 L340.9 362.9 L344.6 363 L348 362.8 L351.1 362.2 L353.8 361.3 L356.1 360.4 L357.8 359.7 L358.9 359 L359.6 358.3 L360 357.9 L360.3 357.6 L360.5 357.4M330.9 349.4 L330.8 350.1 L330.7 351.4 L330.4 353.4 L330.1 356 L329.9 358.1 L329.9 359.7 L330.1 360.6 L330.4 361.1 L330.9 362 L331.5 363.6 L332.3 365.6 L333.2 368.3 L334.1 370.9 L334.9 373.6 L335.8 376.4 L336.5 379.1 L337.2 381.8 L337.8 384.5 L338.4 387 L338.8 389.5 L339.2 392 L339.4 394.4 L339.5 396.9 L339.5 399.4 L339.5 401.2 L339.5 402.5 L339.5 403.1M342 350 L342.2 350 L342.7 350 L343.4 350 L344.3 350 L345.1 350.9 L345.7 352.5 L346.1 355.1 L346.4 358.5 L346.8 361.7 L347.3 364.8 L347.8 367.8 L348.5 370.5 L349 373.2 L349.5 375.6 L349.9 377.9 L350.1 380.1 L350.3 382.3 L350.4 384.6 L350.4 387 L350.2 389.5 L350 391.7 L349.7 393.7 L349.3 395.5 L348.8 397.1 L348.5 398.2 L348.2 399 L348.1 399.4M349.4 348.1 L349.5 348.8 L349.7 350.3 L350.1 352.6 L350.5 355.5 L351.3 357.3 L352.4 357.9 L353.7 357.2 L355.5 355.3 L357 354.4 L358.3 354.4 L359.4 355.3 L360.3 357.1 L361.2 359 L361.9 361 L362.6 363.1 L363.3 365.3 L363.8 367.4 L364.3 369.6 L364.6 371.8 L364.9 373.9 L365.2 376 L365.3 378 L365.3 380 L365.3 381.8 L365 383.7 L364.6 385.5 L363.9 387.4 L363 389.2 L362 390.8 L360.8 392.2 L359.4 393.4 L357.9 394.3 L356.7 395 L356 395.5 L355.6 395.7M312.3 392 L313.1 391.6 L314.6 390.8 L316.9 389.7 L320.1 388.1 L323.2 386.8 L326.4 385.7 L329.6 384.9 L332.8 384.2 L336.1 383.8 L339.3 383.5 L342.5 383.3 L345.8 383.3 L348.7 383.1 L351.4 382.6 L353.9 381.9 L356 381 L358.3 380 L360.7 378.9 L363.2 377.8 L365.9 376.5 L367.8 375.6 L369.1 375 L369.8 374.7M314.8 403.1 L315.6 402.7 L317.1 401.9 L319.4 400.8 L322.6 399.2 L325.6 397.8 L328.7 396.6 L331.8 395.5 L334.9 394.6 L337.9 393.9 L340.7 393.4 L343.4 393.2 L346.1 393.2 L348.6 393 L351.1 392.7 L353.5 392.3 L355.8 391.6 L358.1 391 L360.3 390.4 L362.5 389.8 L364.7 389.2 L366.3 388.8 L367.4 388.5 L367.9 388.3M316 410 L316.8 409.9 L318.3 409.6 L320.6 409.2 L323.8 408.8 L326.8 408.1 L329.7 407.2 L332.6 406.2 L335.3 404.9 L338 403.8 L340.4 402.7 L342.7 401.7 L344.9 400.8 L347 399.9 L349 398.9 L350.9 398 L352.8 397.1 L354.2 396.4 L355.1 395.9 L355.6 395.7M320.4 314.2 L320.1 314.5 L319.6 315.2 L318.8 316.3 L317.6 317.7 L316.6 319.4 L315.5 321.3 L314.4 323.5 L313.3 325.9 L312.4 328.5 L311.6 331.1 L311 333.8 L310.6 336.5 L310.3 339 L310.1 341.2 L310.1 343 L310.3 344.6 L310.7 346.6 L311.3 349 L312.1 351.8 L313.2 355.1 L314.4 358.5 L315.6 362 L316.9 365.6 L318.4 369.4 L319.7 372.9 L320.9 376.1 L322.1 379 L323.1 381.8 L324.1 384.5 L324.9 387.2 L325.6 390 L326.3 392.7 L326.8 395.5 L327.3 398.3 L327.6 401.1 L327.9 403.8 L328.1 406.2 L328.2 408.1 L328.1 409.7 L327.9 410.8 L327.8 411.7 L327.7 412.2 L327.6 412.5M294.4 319.2 L294.8 320.8 L295.7 324.1 L297 329 L298.8 335.6 L300.6 342 L302.6 348.4 L304.7 354.6 L306.8 360.7 L308.8 366.8 L310.5 373 L312.1 379.1 L313.4 385.2 L314.3 391.2 L315 397.1 L315.3 402.9 L315.3 408.6 L315.3 412.8 L315.3 415.7 L315.3 417.1M280.4 329.7 L280.9 330.9 L282 333.3 L283.7 336.9 L285.8 341.7 L288.1 346.8 L290.5 352.3 L293 358.1 L295.7 364.2 L298 370.1 L299.9 375.8 L301.6 381.3 L302.9 386.5 L304 392 L304.9 397.7 L305.5 403.5 L306 409.7 L306.1 414.6 L305.8 418.3 L305.3 420.8 L304.4 422.1 L303.8 423.1 L303.3 423.8 L303.1 424.1M266.4 341.9 L267.3 342.9 L269.1 344.9 L271.9 347.9 L275.5 352 L278.9 356.4 L282 361.1 L284.8 366.2 L287.2 371.8 L289.6 377.4 L291.7 383.3 L293.6 389.3 L295.3 395.6 L296.5 401.3 L297.1 406.6 L297.2 411.4 L296.8 415.8 L296.2 419.6 L295.4 422.9 L294.4 425.6 L293.3 427.8 L292.4 429.5 L291.9 430.6 L291.6 431.1M252.4 354.2 L253.1 355.7 L254.6 358.7 L256.8 363.1 L259.7 369.1 L262.1 374.9 L264 380.6 L265.5 386.2 L266.5 391.8 L267.4 397.1 L268.1 402.4 L268.8 407.5 L269.2 412.5 L269.9 417.2 L270.8 421.5 L271.9 425.5 L273.2 429.1 L274.5 432.3 L275.8 435 L277.1 437.2 L278.4 439 L279.4 440.3 L280.1 441.2 L280.4 441.6M240.2 364.7 L240.8 366 L242.1 368.6 L244 372.5 L246.6 377.8 L248.7 383.5 L250.3 389.9 L251.5 396.7 L252.3 404.2 L253.2 411.2 L254.3 417.7 L255.7 423.9 L257.1 429.6 L258.7 434.8 L260.3 439.6 L262 444 L263.8 447.9 L265.1 450.9 L266 452.8 L266.4 453.8M228 373.4 L228.6 374.6 L229.8 377 L231.5 380.6 L233.9 385.4 L235.8 390.4 L237.3 395.7 L238.5 401.1 L239.1 406.8 L240 412.6 L241 418.5 L242.1 424.5 L243.5 430.6 L244.9 436.4 L246.4 441.9 L248 447 L249.8 451.8 L251.1 455.4 L252 457.8 L252.4 459M215.7 382.1 L216.2 383.2 L217.2 385.4 L218.6 388.7 L220.6 393 L222.2 397.7 L223.5 402.8 L224.5 408.1 L225.2 413.8 L226.1 419.5 L227.3 425.1 L228.8 430.8 L230.6 436.5 L232.4 442.1 L234.4 447.5 L236.5 452.9 L238.7 458.1 L240.4 462.1 L241.4 464.7 L242 466M203.5 389.1 L204 390.2 L204.9 392.4 L206.4 395.7 L208.3 400 L209.9 404.6 L211.1 409.2 L211.9 414 L212.3 418.9 L213.1 424 L214.1 429.2 L215.3 434.6 L216.9 440.2 L218.6 445.4 L220.5 450.4 L222.5 455.2 L224.7 459.6 L226.4 463 L227.4 465.2 L228 466.3M190 397 L190.4 397.9 L191.3 399.8 L192.6 402.6 L194.4 406.4 L195.8 410.3 L196.9 414.4 L197.8 418.8 L198.2 423.2 L199 427.9 L200 432.6 L201.2 437.5 L202.8 442.5 L204.4 447 L206.1 451 L208 454.5 L210 457.5 L211.5 459.8 L212.5 461.2 L213 462M178 402 L178.4 402.9 L179.1 404.6 L180.2 407.2 L181.8 410.8 L183 414.5 L184 418.5 L184.8 422.8 L185.2 427.2 L186 431.8 L187 436.2 L188.2 440.8 L189.8 445.2 L191.2 449.1 L192.8 452.4 L194.2 455 L195.8 457 L196.9 458.5 L197.6 459.5 L198 460M314.7 322.8 L313.6 323.2 L311.4 323.9 L308.1 325.1 L303.6 326.6 L299.5 328.4 L295.8 330.4 L292.3 332.6 L289.2 335.1 L286.1 337.6 L283.1 340.1 L280.2 342.7 L277.3 345.3 L274.1 348.1 L270.6 351 L266.8 354.2 L262.7 357.5 L258.8 360.7 L255.2 363.7 L251.9 366.5 L248.9 369.1 L245.8 371.6 L242.7 374 L239.7 376.2 L236.6 378.3 L233.4 380.4 L230.3 382.5 L227.2 384.7 L224 386.9 L220.9 388.9 L217.7 390.8 L214.6 392.6 L211.5 394.2 L208.3 395.8 L205 397.5 L201.6 399.1 L198.1 400.8 L194.7 402.3 L191.4 403.7 L188.2 404.9 L185.1 406.1 L182.7 406.9 L181.2 407.4 L180.4 407.7M310.3 338.7 L309.7 339.1 L308.6 339.8 L307 340.8 L304.7 342.3 L302.4 343.9 L300 345.7 L297.5 347.8 L294.9 350 L292.4 352.2 L290 354.4 L287.8 356.5 L285.6 358.7 L282.8 361.1 L279.2 364 L274.9 367.2 L270 370.7 L265.4 374.1 L261.3 377.3 L257.7 380.2 L254.4 383 L251.2 385.5 L248 387.9 L244.9 390 L241.7 391.9 L238.5 393.9 L235.3 396 L232 398.1 L228.6 400.3 L225.3 402.3 L222.1 404 L218.9 405.6 L215.7 406.9 L212.5 408.2 L209.1 409.5 L205.6 410.7 L202.1 412 L198.6 413.1 L195.1 414.1 L191.8 415 L188.5 415.9 L186.1 416.5 L184.4 416.9 L183.6 417.1M313.8 356.8 L313.4 357.1 L312.5 357.7 L311.3 358.6 L309.6 359.8 L307.8 361.2 L305.8 362.9 L303.7 364.7 L301.3 366.8 L299.1 368.8 L297 370.9 L294.9 372.9 L292.8 374.9 L289.9 377.3 L286 380.1 L281.1 383.3 L275.3 386.9 L270.1 390.3 L265.4 393.5 L261.2 396.6 L257.6 399.4 L254.1 402 L250.8 404.3 L247.5 406.3 L244.4 408 L241.2 409.9 L237.9 411.8 L234.6 413.9 L231.2 416 L227.8 417.9 L224.5 419.5 L221.2 420.8 L217.9 421.9 L214.6 422.8 L211.1 423.6 L207.6 424.4 L204.1 425.1 L200.5 425.7 L197.1 426.3 L193.7 426.9 L190.4 427.4 L187.9 427.7 L186.2 428 L185.4 428.1M320.2 374.3 L319.7 374.6 L318.7 375.2 L317.2 376.1 L315.1 377.3 L313.1 378.7 L310.9 380.3 L308.7 382.1 L306.4 384.1 L304.2 386.1 L302.1 388.1 L300 390 L298.1 392 L294.9 394.3 L290.7 397 L285.3 400.1 L278.7 403.6 L272.9 406.9 L267.9 410.1 L263.6 413.1 L260.1 416 L256.8 418.5 L253.5 420.7 L250.3 422.6 L247.2 424.2 L244.1 425.8 L241 427.7 L237.9 429.6 L234.7 431.6 L231.5 433.3 L228.2 434.8 L224.8 435.8 L221.4 436.6 L217.9 437.2 L214.3 437.6 L210.7 438 L207 438.1 L203.4 438.3 L199.8 438.5 L196.3 438.6 L192.9 438.8 L190.3 438.9 L188.6 439 L187.7 439M325.6 390 L324.9 390.3 L323.6 390.9 L321.5 391.9 L318.8 393.1 L316.2 394.6 L313.6 396.2 L311.2 398 L308.9 399.9 L306.6 401.9 L304.4 403.8 L302.3 405.7 L300.3 407.6 L297.1 409.8 L292.9 412.4 L287.5 415.3 L281 418.6 L275.4 421.7 L270.6 424.8 L266.6 427.7 L263.4 430.5 L260.3 433 L257.1 435.1 L253.9 436.8 L250.8 438.3 L247.7 439.8 L244.7 441.5 L241.7 443.2 L238.9 445.2 L235.8 446.7 L232.6 447.9 L229.3 448.8 L225.7 449.3 L222.1 449.6 L218.4 449.7 L214.7 449.6 L210.9 449.4 L207.2 449.1 L203.5 448.9 L199.8 448.7 L196.3 448.6 L193.6 448.5 L191.8 448.4 L190.9 448.4M327.7 402.2 L326.9 402.5 L325.4 403.1 L323.1 404 L319.9 405.2 L317.1 406.6 L314.4 408.2 L311.9 410 L309.6 411.9 L307.2 413.9 L304.7 415.8 L302.2 417.6 L299.5 419.4 L296.3 421.5 L292.5 423.9 L288 426.5 L282.9 429.5 L278.3 432.4 L274.2 435.3 L270.5 438.2 L267.4 441 L264.2 443.5 L260.9 445.6 L257.6 447.3 L254.3 448.6 L251.1 450.1 L248.1 451.6 L245.3 453.3 L242.6 455.2 L239.7 456.6 L236.6 457.6 L233.3 458.3 L229.7 458.6 L226.1 458.6 L222.4 458.4 L218.7 458 L214.8 457.2 L211 456.7 L207.3 456.2 L203.5 455.8 L199.8 455.5 L197 455.3 L195.1 455.2 L194.2 455.1M328.1 409.4 L327.3 409.7 L325.7 410.3 L323.3 411.2 L320.1 412.3 L317 413.7 L314.1 415.2 L311.3 416.9 L308.7 418.8 L305.9 420.6 L303.1 422.4 L300.3 424.2 L297.3 425.9 L294.2 427.9 L291 430.1 L287.6 432.6 L284 435.3 L280.5 438.1 L277.1 440.9 L273.7 443.8 L270.3 446.8 L267 449.3 L263.6 451.5 L260.1 453.2 L256.7 454.5 L253.4 456 L250.4 457.5 L247.6 459.2 L244.9 460.9 L242.1 462.3 L239 463.3 L235.7 463.8 L232.2 463.9 L228.6 463.8 L224.9 463.4 L221.2 462.7 L217.5 461.7 L213.7 460.9 L210 460.2 L206.2 459.6 L202.5 459.2 L199.7 458.8 L197.8 458.6 L196.9 458.5" />
<defs><linearGradient id="toeG" x1="0" y1="0" x2="0.4" y2="1"><stop offset="0" stop-color="#505050"/><stop offset="0.4" stop-color="#6a6a6a"/><stop offset="1" stop-color="#343434"/></linearGradient></defs>
<polygon points="185.2,400.6 184.5,400.8 183.1,401.3 181,402 178.3,402.9 175.4,403.8 172.5,404.8 169.4,405.7 166.3,406.6 163.3,407.5 160.2,408.5 157.1,409.4 154,410.3 150.9,411.2 147.8,412.2 144.8,413.1 141.6,414 138.7,414.9 135.9,415.9 133.3,416.8 130.9,417.7 128.6,418.7 126.4,419.8 124.4,420.9 122.6,422.2 120.9,423.5 119.4,424.9 118.1,426.3 117,427.9 116.1,429 115.6,429.8 115.3,430.2 114.8,433.2 116,436.4 116.2,436.7 116.7,437.3 117.4,438.2 118.4,439.5 119.5,440.5 120.9,441.5 122.6,442.2 124.4,442.9 126.4,443.4 128.6,443.9 130.9,444.3 133.3,444.5 135.7,444.7 138,444.7 140.3,444.5 142.4,444.3 144.8,443.8 147.2,443.3 149.9,442.7 152.6,441.9 155.3,441.2 157.7,440.4 160,439.6 162.2,438.8 164.3,438 166.5,437.1 168.7,436.2 170.8,435.3 172.9,434.4 174.9,433.4 176.9,432.5 178.7,431.6 180.1,430.9 181,430.4 181.5,430.2" fill="url(#toeG)" />
<path class="w" d="M176 403.6 L175.9 404.6 L175.6 406.6 L175.2 409.7 L174.6 413.8 L174.2 417.7 L173.8 421.5 L173.7 425.2 L173.6 428.8 L173.5 431.4 L173.5 433.2 L173.5 434.1M166.8 406.5 L166.7 407.5 L166.5 409.6 L166.2 412.7 L165.7 416.8 L165.4 420.8 L165.3 424.7 L165.2 428.4 L165.3 432.1 L165.3 434.8 L165.4 436.6 L165.4 437.5M157.5 409.3 L157.4 410.3 L157.3 412.4 L157.1 415.5 L156.8 419.7 L156.6 423.7 L156.5 427.7 L156.6 431.4 L156.8 435.1 L156.9 437.9 L157 439.7 L157.1 440.6M148.3 412 L148.2 413 L148.1 415.1 L148 418.2 L147.8 422.3 L147.7 426.3 L147.7 430.2 L147.9 433.9 L148.2 437.6 L148.4 440.3 L148.5 442.1 L148.6 443M139 414.8 L139 415.8 L138.9 417.8 L138.8 420.7 L138.7 424.7 L138.6 428.5 L138.8 432.3 L139 435.8 L139.4 439.3 L139.6 441.9 L139.8 443.6 L139.9 444.5M129.9 418.1 L129.9 419 L129.8 420.7 L129.8 423.4 L129.6 426.9 L129.7 430.3 L129.8 433.6 L130.1 436.7 L130.5 439.8 L130.8 442 L131 443.5 L131.1 444.3M121.6 423 L121.6 423.7 L121.5 425 L121.4 427 L121.3 429.6 L121.2 432.2 L121.4 434.6 L121.6 436.8 L122 439 L122.2 440.6 L122.4 441.7 L122.5 442.2M115.3 430.2 L115.3 430.5 L115.2 431 L115.1 431.7 L114.9 432.8 L114.9 433.7 L114.9 434.4 L115.2 435.1 L115.5 435.6 L115.7 436 L115.9 436.3 L116 436.4M184.3 408 L177.8 410.4 L171.3 412.7 L164.8 414.8 L158.3 416.8 L151.6 418.8 L145 420.8 L138.4 422.5 L131.9 424.2 L125.5 426.2 L119.8 428.8 L115.5 431.8 L116.3 431.9M183.4 415.4 L177.1 417.9 L170.9 420.4 L164.5 422.6 L158.2 424.6 L151.6 426.6 L145.2 428.4 L138.6 429.8 L132.1 431 L125.8 432 L120 432.9 L115.6 433.3 L116.3 433.2M182.4 422.8 L176.4 425.4 L170.4 428 L164.2 430.3 L158 432.5 L151.7 434.4 L145.3 436 L138.9 437.2 L132.4 437.7 L126 437.7 L120.1 437 L115.8 434.8 L116.3 434.4M185.2 400.6 L184.5 400.8 L183.1 401.3 L181 402 L178.3 402.9 L175.4 403.8 L172.5 404.8 L169.4 405.7 L166.3 406.6 L163.3 407.5 L160.2 408.5 L157.1 409.4 L154 410.3 L150.9 411.2 L147.8 412.2 L144.8 413.1 L141.6 414 L138.7 414.9 L135.9 415.9 L133.3 416.8 L130.9 417.7 L128.6 418.7 L126.4 419.8 L124.4 420.9 L122.6 422.2 L120.9 423.5 L119.4 424.9 L118.1 426.3 L117 427.9 L116.1 429 L115.6 429.8 L115.3 430.2 L114.8 433.2 L116 436.4 L116.2 436.7 L116.7 437.3 L117.4 438.2 L118.4 439.5 L119.5 440.5 L120.9 441.5 L122.6 442.2 L124.4 442.9 L126.4 443.4 L128.6 443.9 L130.9 444.3 L133.3 444.5 L135.7 444.7 L138 444.7 L140.3 444.5 L142.4 444.3 L144.8 443.8 L147.2 443.3 L149.9 442.7 L152.6 441.9 L155.3 441.2 L157.7 440.4 L160 439.6 L162.2 438.8 L164.3 438 L166.5 437.1 L168.7 436.2 L170.8 435.3 L172.9 434.4 L174.9 433.4 L176.9 432.5 L178.7 431.6 L180.1 430.9 L181 430.4 L181.5 430.2" />
<polygon points="185.2,424 184.3,424.3 182.6,424.9 180.1,425.9 176.7,427.1 173.5,428.4 170.6,429.8 167.9,431.3 165.4,432.8 163,434.3 160.7,435.7 158.5,437 156.3,438.2 154.4,439.5 152.7,440.8 151.2,442.1 150,443.5 149,444.5 148.4,445.2 148.1,445.5 146.7,448.7 148.1,451.2 148.4,451.4 149,451.9 150,452.6 151.2,453.5 152.7,454.2 154.4,454.8 156.3,455.1 158.5,455.2 160.4,455.1 162.1,454.9 163.6,454.5 164.8,453.8 166.2,453.1 167.8,452.4 169.5,451.5 171.3,450.6 173.2,449.6 175,448.5 176.9,447.4 178.7,446.3 180.6,445.1 182.4,444.1 184.3,443 186.1,442.1 188.1,441.1 190.1,440.1 192.1,439 194.3,438 195.9,437.2 197,436.7 197.5,436.4" fill="url(#toeG)" />
<path class="w" d="M178.4 426.5 L178.7 427 L179.2 428 L180.1 429.5 L181.2 431.5 L182.4 433.4 L183.8 435.1 L185.3 436.8 L186.9 438.2 L188.1 439.4 L188.9 440.1 L189.3 440.5M171.7 429.2 L171.9 429.8 L172.4 430.8 L173.1 432.5 L174 434.7 L175.1 436.8 L176.3 438.7 L177.6 440.5 L179 442.3 L180.1 443.5 L180.8 444.4 L181.2 444.8M165.4 432.8 L165.6 433.4 L166 434.6 L166.5 436.3 L167.2 438.6 L168.1 440.9 L169.1 442.9 L170.2 444.9 L171.4 446.7 L172.4 448.1 L173 449 L173.3 449.5M159.3 436.5 L159.4 437.1 L159.7 438.3 L160 440.1 L160.5 442.5 L161.1 444.7 L161.8 446.9 L162.7 448.9 L163.6 450.8 L164.4 452.2 L164.9 453.1 L165.1 453.6M153.2 440.4 L153.2 440.9 L153.3 442 L153.4 443.5 L153.5 445.6 L153.8 447.6 L154.1 449.4 L154.6 451.1 L155.3 452.7 L155.7 453.9 L156 454.7 L156.2 455.1M148.1 445.5 L148 445.7 L147.9 446.2 L147.7 446.9 L147.5 447.9 L147.3 448.7 L147.3 449.5 L147.5 450 L147.7 450.5 L147.9 450.9 L148 451.1 L148.1 451.2M189.3 428.1 L185.3 429.7 L181.4 431.4 L177.4 433.1 L173.6 435.1 L169.9 437.3 L166.2 439.4 L162.5 441.6 L158.7 443.5 L154.8 445 L151.3 446.4 L148.1 447.4 L148.2 447.9M193.4 432.3 L189.2 434.2 L184.9 436.2 L180.8 438.1 L176.7 440.3 L172.7 442.7 L168.7 445.1 L164.5 447.2 L160.4 449.2 L156 450.1 L151.7 450.2 L148.1 449.3 L148.2 449.5M185.2 424 L184.3 424.3 L182.6 424.9 L180.1 425.9 L176.7 427.1 L173.5 428.4 L170.6 429.8 L167.9 431.3 L165.4 432.8 L163 434.3 L160.7 435.7 L158.5 437 L156.3 438.2 L154.4 439.5 L152.7 440.8 L151.2 442.1 L150 443.5 L149 444.5 L148.4 445.2 L148.1 445.5 L146.7 448.7 L148.1 451.2 L148.4 451.4 L149 451.9 L150 452.6 L151.2 453.5 L152.7 454.2 L154.4 454.8 L156.3 455.1 L158.5 455.2 L160.4 455.1 L162.1 454.9 L163.6 454.5 L164.8 453.8 L166.2 453.1 L167.8 452.4 L169.5 451.5 L171.3 450.6 L173.2 449.6 L175 448.5 L176.9 447.4 L178.7 446.3 L180.6 445.1 L182.4 444.1 L184.3 443 L186.1 442.1 L188.1 441.1 L190.1 440.1 L192.1 439 L194.3 438 L195.9 437.2 L197 436.7 L197.5 436.4" />
<polygon points="198.8,436.4 198,436.6 196.2,437.1 193.7,437.8 190.3,438.7 187.1,439.9 184,441.3 181,442.9 178.3,444.7 175.9,446.4 173.9,447.8 172.2,449.1 171,450.1 170,450.9 169.4,451.4 169.1,451.7 168.1,454.4 169.1,457.4 169.4,457.6 170,458.1 171,458.8 172.2,459.7 173.7,460.5 175.4,461 177.3,461.4 179.5,461.5 181.4,461.5 183.1,461.2 184.6,460.7 185.8,459.9 187.3,459 189,457.9 190.9,456.6 193.1,455.1 195.5,453.7 198.1,452.3 200.9,450.9 204,449.5 206.3,448.5 207.8,447.8 208.6,447.5" fill="url(#toeG)" />
<path class="w" d="M192.3 438.2 L192.5 438.7 L192.9 439.6 L193.5 441 L194.2 442.9 L195.1 444.6 L196.2 446.2 L197.3 447.7 L198.6 449.1 L199.5 450.1 L200.2 450.8 L200.5 451.1M185.9 440.4 L186.1 440.9 L186.4 442 L186.8 443.6 L187.4 445.7 L188.2 447.7 L189 449.5 L190 451.3 L191.1 452.9 L192 454.1 L192.5 454.9 L192.8 455.3M179.9 443.6 L180 444.2 L180.2 445.3 L180.6 447.1 L181 449.4 L181.6 451.6 L182.2 453.7 L183.1 455.6 L184 457.5 L184.7 458.8 L185.2 459.7 L185.4 460.2M174.4 447.5 L174.4 448 L174.4 449 L174.5 450.5 L174.6 452.4 L174.7 454.3 L175.1 456 L175.5 457.6 L176.1 459.1 L176.5 460.2 L176.8 460.9 L176.9 461.3M169.1 451.7 L169 451.9 L168.9 452.4 L168.7 453.1 L168.5 454.1 L168.3 454.9 L168.3 455.7 L168.5 456.2 L168.7 456.7 L168.9 457.1 L169 457.3 L169.1 457.4M202.1 440.1 L198.8 441.2 L195.7 442.2 L192.5 443.4 L189.4 444.8 L186.4 446.4 L183.5 448 L180.6 449.8 L177.6 451.2 L174.6 452.2 L171.8 453.1 L169.1 453.6 L169.6 453.6M205.3 443.8 L201.9 445.1 L198.5 446.5 L195.1 447.9 L191.8 449.6 L188.6 451.5 L185.5 453.5 L182.3 455.4 L178.9 456.4 L175.4 456.7 L172 456.4 L169.1 455.5 L169.6 455.2M198.8 436.4 L198 436.6 L196.2 437.1 L193.7 437.8 L190.3 438.7 L187.1 439.9 L184 441.3 L181 442.9 L178.3 444.7 L175.9 446.4 L173.9 447.8 L172.2 449.1 L171 450.1 L170 450.9 L169.4 451.4 L169.1 451.7 L168.1 454.4 L169.1 457.4 L169.4 457.6 L170 458.1 L171 458.8 L172.2 459.7 L173.7 460.5 L175.4 461 L177.3 461.4 L179.5 461.5 L181.4 461.5 L183.1 461.2 L184.6 460.7 L185.8 459.9 L187.3 459 L189 457.9 L190.9 456.6 L193.1 455.1 L195.5 453.7 L198.1 452.3 L200.9 450.9 L204 449.5 L206.3 448.5 L207.8 447.8 L208.6 447.5" />
<polygon points="213.6,447.5 213.1,447.7 212,448 210.3,448.4 208.2,449.1 205.9,449.8 203.6,450.8 201.2,451.8 198.8,453.1 196.6,454.2 194.7,455.3 193,456.4 191.7,457.3 190.6,458.1 189.9,458.6 189.6,458.8 188.6,460.6 190.1,462.8 190.5,463 191.3,463.4 192.4,464 194,464.8 195.8,465.4 197.8,465.9 200,466.3 202.5,466.4 204.6,466.4 206.5,466.1 208,465.6 209.3,464.9 210.6,464.1 212.2,463.1 213.9,462 215.7,460.9 217.6,459.7 219.4,458.6 221.3,457.5 223.1,456.5 224.5,455.7 225.4,455.2 225.9,454.9" fill="url(#toeG)" />
<path class="w" d="M208.5 449 L208.8 449.4 L209.3 450.1 L210.1 451.2 L211.2 452.7 L212.3 454 L213.7 455.3 L215.1 456.4 L216.7 457.3 L217.8 458.1 L218.6 458.6 L219 458.8M203.5 450.9 L203.7 451.3 L204.1 452.2 L204.8 453.5 L205.6 455.3 L206.6 456.9 L207.7 458.5 L208.9 459.8 L210.3 461.1 L211.3 462.1 L212 462.7 L212.3 463M198.7 453.2 L198.8 453.7 L199.1 454.6 L199.5 456 L200.1 457.9 L200.8 459.7 L201.6 461.3 L202.5 462.8 L203.6 464.2 L204.4 465.3 L204.9 466 L205.2 466.3M194 455.8 L194 456.2 L194.1 456.9 L194.3 458.1 L194.4 459.6 L194.7 460.9 L195.2 462.2 L195.7 463.3 L196.4 464.3 L196.9 465.1 L197.2 465.6 L197.4 465.8M189.6 458.8 L189.6 459 L189.5 459.4 L189.3 459.9 L189.1 460.7 L189.1 461.3 L189.1 461.8 L189.3 462.2 L189.6 462.4 L189.9 462.6 L190 462.7 L190.1 462.8M217.7 450 L215.1 451 L212.5 452.1 L209.9 453.2 L207.4 454.4 L204.9 455.7 L202.4 456.9 L199.8 457.9 L197.2 458.6 L194.6 459.2 L192.2 459.7 L189.8 460.1 L190.1 459.8M221.8 452.4 L219 453.9 L216.1 455.3 L213.3 456.7 L210.5 458.3 L207.7 459.9 L204.8 461.4 L201.8 462.1 L198.7 462.4 L195.7 462.4 L192.7 462.1 L189.9 461.5 L190.1 461.4M213.6 447.5 L213.1 447.7 L212 448 L210.3 448.4 L208.2 449.1 L205.9 449.8 L203.6 450.8 L201.2 451.8 L198.8 453.1 L196.6 454.2 L194.7 455.3 L193 456.4 L191.7 457.3 L190.6 458.1 L189.9 458.6 L189.6 458.8 L188.6 460.6 L190.1 462.8 L190.5 463 L191.3 463.4 L192.4 464 L194 464.8 L195.8 465.4 L197.8 465.9 L200 466.3 L202.5 466.4 L204.6 466.4 L206.5 466.1 L208 465.6 L209.3 464.9 L210.6 464.1 L212.2 463.1 L213.9 462 L215.7 460.9 L217.6 459.7 L219.4 458.6 L221.3 457.5 L223.1 456.5 L224.5 455.7 L225.4 455.2 L225.9 454.9" />
<polygon points="230.9,454.9 230.5,455.1 229.7,455.4 228.6,455.8 227,456.5 225.3,457.2 223.5,457.9 221.4,458.8 219.3,459.7 217.4,460.5 215.9,461.2 214.8,461.8 214,462.3 213.4,462.6 213,462.9 212.8,463 212.3,464.3 216,465 216.5,465.2 217.4,465.5 218.8,466 220.7,466.7 222.7,467.1 224.9,467.2 227.2,467.1 229.6,466.8 231.9,466.3 234.1,465.8 236.1,465.3 237.9,464.7 239.8,464.1 241.6,463.4 243.5,462.8 245.3,462.1 246.7,461.6 247.6,461.3 248.1,461.1" fill="url(#toeG)" />
<path class="w" d="M226.3 456.8 L226.7 457.1 L227.4 457.7 L228.6 458.5 L230.1 459.6 L231.7 460.7 L233.4 461.5 L235.3 462.3 L237.3 462.9 L238.8 463.4 L239.8 463.7 L240.3 463.9M221.7 458.7 L222 459 L222.5 459.6 L223.3 460.5 L224.4 461.7 L225.6 462.7 L226.9 463.7 L228.4 464.5 L229.9 465.2 L231.1 465.7 L231.9 466 L232.3 466.2M217.1 460.6 L217.3 460.9 L217.6 461.4 L218 462.2 L218.6 463.3 L219.4 464.2 L220.2 465.1 L221.2 465.8 L222.3 466.3 L223.2 466.8 L223.7 467.1 L224 467.2M212.8 463 L212.8 463.1 L212.9 463.4 L213 463.8 L213.2 464.2 L213.4 464.6 L213.9 464.9 L214.4 465 L215 465 L215.5 465 L215.8 465 L216 465M236.6 457 L234.5 457.8 L232.5 458.6 L230.4 459.4 L228.4 460.1 L226.2 460.8 L224.2 461.5 L222.1 462.1 L220 462.7 L217.8 463.1 L215.8 463.4 L213.9 463.7 L213.8 463.5M242.4 459 L239.9 459.9 L237.5 460.8 L235 461.8 L232.5 462.6 L230 463.4 L227.5 464 L224.9 464.6 L222.4 464.9 L219.8 465 L217.4 464.7 L214.9 464.3 L213.8 465.1M230.9 454.9 L230.5 455.1 L229.7 455.4 L228.6 455.8 L227 456.5 L225.3 457.2 L223.5 457.9 L221.4 458.8 L219.3 459.7 L217.4 460.5 L215.9 461.2 L214.8 461.8 L214 462.3 L213.4 462.6 L213 462.9 L212.8 463 L212.3 464.3 L216 465 L216.5 465.2 L217.4 465.5 L218.8 466 L220.7 466.7 L222.7 467.1 L224.9 467.2 L227.2 467.1 L229.6 466.8 L231.9 466.3 L234.1 465.8 L236.1 465.3 L237.9 464.7 L239.8 464.1 L241.6 463.4 L243.5 462.8 L245.3 462.1 L246.7 461.6 L247.6 461.3 L248.1 461.1" />
</g>
<path class="w" d="M291.7 268 L291.2 281.8 L290.5 291.7 L291.2 301.6 L289.3 311.4 L285.6 320 L279.4 328.7 L270.7 334.9 L262 341M188.9 399.3 L174 404.3 L161.7 408 L149.4 411.7 L137 415.4 L127.2 419 L119.8 424 L115.3 430.2 L116 436.4 L119.8 441.3 L127.2 443.8 L137 445 L145.7 443.8 L146.9 445 L148.1 451.2 L153 454.9 L161.7 455.4 L166.7 452.4 L167.9 451.2 L169.1 457.4 L174 461 L182.7 461.8 L187.7 458.6 L188.9 457.4 L190.1 462.3 L196.3 466 L206.2 466.7 L211.1 463.5 L212.3 461 L216 464.8 L223.5 467.7 L233.3 466 L240.7 463.5 L248.1 461 L260 457.4 L262 456 L274.4 450 L284.3 440 L294.2 430.2 L304 421.6 L316.4 413 L328.8 408 L341 403 L353.5 399.3 L364.6 394.4 L369.5 385.8 L370.7 375.9 L368.3 371 L365.8 363.3 L360.9 354.7 L356 346 L353.5 338.6 L354.7 328.7 L353.5 318.9 L351 307.7 L347.3 297.9 L342.3 289.2 L339.1 281.8 L338.6 268 L291.7 268" />
</svg>
<rect x="489.7" y="250.6" width="475.3" height="235.4" fill="#3a3830"/>
<rect x="491" y="252" width="474" height="234" fill="#fdfdf4"/>
<rect x="491" y="252" width="474" height="17.3" fill="#fff"/>
<svg x="493.5" y="269.3" width="471.5" height="216.7" viewBox="493.5 269.3 471.5 216.7">
<rect x="491" y="269" width="474" height="217" fill="#a1a1a1"/>
<line x1="492.5" y1="269" x2="492.5" y2="486" class="g2"/>
<line x1="503.6" y1="269" x2="503.6" y2="486" class="g2"/>
<line x1="514.7" y1="269" x2="514.7" y2="486" class="g2"/>
<line x1="525.8" y1="269" x2="525.8" y2="486" class="g2"/>
<line x1="536.9" y1="269" x2="536.9" y2="486" class="g2"/>
<line x1="548.0" y1="269" x2="548.0" y2="486" class="g2"/>
<line x1="559.1" y1="269" x2="559.1" y2="486" class="g2"/>
<line x1="570.2" y1="269" x2="570.2" y2="486" class="g2"/>
<line x1="581.3" y1="269" x2="581.3" y2="486" class="g2"/>
<line x1="592.4" y1="269" x2="592.4" y2="486" class="g2"/>
<line x1="603.5" y1="269" x2="603.5" y2="486" class="g2"/>
<line x1="614.6" y1="269" x2="614.6" y2="486" class="g2"/>
<line x1="625.7" y1="269" x2="625.7" y2="486" class="g2"/>
<line x1="636.8" y1="269" x2="636.8" y2="486" class="g2"/>
<line x1="647.9" y1="269" x2="647.9" y2="486" class="g2"/>
<line x1="659.0" y1="269" x2="659.0" y2="486" class="g2"/>
<line x1="670.1" y1="269" x2="670.1" y2="486" class="g2"/>
<line x1="681.2" y1="269" x2="681.2" y2="486" class="g2"/>
<line x1="692.3" y1="269" x2="692.3" y2="486" class="g2"/>
<line x1="703.4" y1="269" x2="703.4" y2="486" class="g2"/>
<line x1="714.5" y1="269" x2="714.5" y2="486" class="g2"/>
<line x1="725.6" y1="269" x2="725.6" y2="486" class="g2"/>
<line x1="736.7" y1="269" x2="736.7" y2="486" class="g2"/>
<line x1="747.8" y1="269" x2="747.8" y2="486" class="g2"/>
<line x1="758.9" y1="269" x2="758.9" y2="486" class="g2"/>
<line x1="770.0" y1="269" x2="770.0" y2="486" class="g2"/>
<line x1="781.1" y1="269" x2="781.1" y2="486" class="g2"/>
<line x1="792.2" y1="269" x2="792.2" y2="486" class="g2"/>
<line x1="803.3" y1="269" x2="803.3" y2="486" class="g2"/>
<line x1="814.4" y1="269" x2="814.4" y2="486" class="g2"/>
<line x1="825.5" y1="269" x2="825.5" y2="486" class="g2"/>
<line x1="836.6" y1="269" x2="836.6" y2="486" class="g2"/>
<line x1="847.7" y1="269" x2="847.7" y2="486" class="g2"/>
<line x1="858.8" y1="269" x2="858.8" y2="486" class="g2"/>
<line x1="869.9" y1="269" x2="869.9" y2="486" class="g2"/>
<line x1="881.0" y1="269" x2="881.0" y2="486" class="g2"/>
<line x1="892.1" y1="269" x2="892.1" y2="486" class="g2"/>
<line x1="903.2" y1="269" x2="903.2" y2="486" class="g2"/>
<line x1="914.3" y1="269" x2="914.3" y2="486" class="g2"/>
<line x1="925.4" y1="269" x2="925.4" y2="486" class="g2"/>
<line x1="936.5" y1="269" x2="936.5" y2="486" class="g2"/>
<line x1="947.6" y1="269" x2="947.6" y2="486" class="g2"/>
<line x1="958.7" y1="269" x2="958.7" y2="486" class="g2"/>
<line x1="491" y1="263.7" x2="965" y2="263.7" class="g2"/>
<line x1="491" y1="274.9" x2="965" y2="274.9" class="g2"/>
<line x1="491" y1="286.1" x2="965" y2="286.1" class="g2"/>
<line x1="491" y1="297.3" x2="965" y2="297.3" class="g2"/>
<line x1="491" y1="308.5" x2="965" y2="308.5" class="g2"/>
<line x1="491" y1="319.7" x2="965" y2="319.7" class="g2"/>
<line x1="491" y1="330.9" x2="965" y2="330.9" class="g2"/>
<line x1="491" y1="342.1" x2="965" y2="342.1" class="g2"/>
<line x1="491" y1="364.5" x2="965" y2="364.5" class="g2"/>
<line x1="491" y1="375.7" x2="965" y2="375.7" class="g2"/>
<line x1="491" y1="386.9" x2="965" y2="386.9" class="g2"/>
<line x1="491" y1="398.1" x2="965" y2="398.1" class="g2"/>
<line x1="491" y1="409.3" x2="965" y2="409.3" class="g2"/>
<line x1="491" y1="420.5" x2="965" y2="420.5" class="g2"/>
<line x1="491" y1="431.7" x2="965" y2="431.7" class="g2"/>
<line x1="491" y1="442.9" x2="965" y2="442.9" class="g2"/>
<line x1="491" y1="454.1" x2="965" y2="454.1" class="g2"/>
<line x1="491" y1="465.3" x2="965" y2="465.3" class="g2"/>
<line x1="491" y1="476.5" x2="965" y2="476.5" class="g2"/>
<line x1="491" y1="353.3" x2="965" y2="353.3" stroke="#2a2a2a" stroke-width="1.6"/>
<line x1="770.5" y1="269" x2="770.5" y2="486" stroke="#2a2a2a" stroke-width="1.6"/>
<defs><filter id="blBR" x="-30%" y="-30%" width="160%" height="160%"><feGaussianBlur stdDeviation="0.8"/></filter></defs>
<g filter="url(#blBR)">
<polygon points="774.3,267.9 778.9,280 777,291.1 779.8,304 785.4,317 788.5,328.1 789.6,339.2 788.5,348.5 787.2,357 820,357 820.7,344.8 821.5,331.8 818.7,322.6 815.6,313.3 813.1,302.2 809.4,291.1 803.9,280 795.6,267.9" fill="#414141" />
<polygon points="788.5,345 786.3,354.3 787.2,363.5 801.1,372.8 814.1,363.5 817.8,361.7 820.7,352.4 820,345" fill="#383838" />
<polygon points="787.2,363.5 781.7,372.8 777,382 772.4,391.3 770.6,400.6 773.3,406.1 784.4,406.1 788.1,398.7 795.6,389.4 803,380.2 814.1,363.5" fill="#424242" />
<polygon points="767.8,407.1 772.4,416.4 777,425.6 781.7,434.9 785.4,446 788.1,457.1 790,468.2 803.9,470.1 802.6,459 802,447.9 801.5,436.7 799.3,427.5 794.6,418.2 789.1,409 785.4,403.4" fill="#414141" />
<polygon points="790,468.2 780.7,477.5 773.3,486 810.4,486 807.6,477.5 803.9,470.1" fill="#444" />
</g>
<g filter="url(#blBR)" opacity="0.8">
<polygon points="779.8,268.9 788.1,268.9 795.6,283.7 788.1,287.4 781.7,278.1" fill="#7a7a7a" />
<polygon points="777,289.2 786.3,285.5 793.7,302.2 786.3,309.6 779.8,300.3" fill="#6c6c6c" />
<polygon points="793.7,328.1 800.2,328.1 799.3,341.1 794.6,341.1" fill="#7a7a7a" />
</g>
<path d="M757.6,484.5 L770.6,480.8" stroke="#2a2a2a" stroke-width="2.2" fill="none"/>
<path class="w" d="M759.4 267.9 L795.6 267.9M763.2 279.2 L795.7 268.1M768.2 290.1 L803.3 279.1M773.9 300.6 L809.4 291.1M780 310.9 L813.4 303.8M785.1 321.7 L815.2 317.1M787.8 333.3 L815.8 330.4M788.1 345.2 L817.6 343.7M786.3 357 L818.7 357M759.4 267.9 L763.2 279.2 L768.2 290.1 L773.9 300.6 L780 310.9 L785.1 321.7 L787.8 333.3 L788.1 345.2 L786.3 357M771.346 267.9 L773.925 275.537 L779.783 286.47 L785.615 297.465 L791.022 308.557 L795.033 320.182 L797.04 332.343 L797.835 344.705 L796.992 357M783.292 267.9 L784.65 271.874 L791.366 282.84 L797.33 294.33 L802.044 306.214 L804.966 318.664 L806.28 331.386 L807.57 344.21 L807.684 357M795.6 267.9 L795.7 268.1 L803.3 279.1 L809.4 291.1 L813.4 303.8 L815.2 317.1 L815.8 330.4 L817.6 343.7 L818.7 357M795.6 267.9 L803.9 280 L809.4 291.1 L813.1 302.2 L815 313.3 L815.6 324.4 L815.9 335.5 L817.8 344.8 L818.7 357M788.1 345 L815.9 345M785.5 354.1 L815.1 354.3M786.3 363.5 L814.1 363.5M788.1 345 L785.5 354.1 L786.3 363.5M802 345 L800.3 354.2 L800.2 363.5M815.9 345 L815.1 354.3 L814.1 363.5M786.3 363.5 L814.1 363.5M783.2 368.4 L809.9 368.6M780.2 373.4 L805.6 373.6M777.2 378.3 L801.5 378.8M774.2 383.3 L797.4 383.9M771.3 388.3 L793.2 389.1M768.6 393.4 L789.3 394.3M766 398.6 L785.8 399.9M765 404.3 L783.5 406.1M786.3 363.5 L783.2 368.4 L780.2 373.4 L777.2 378.3 L774.2 383.3 L771.3 388.3 L768.6 393.4 L766 398.6 L765 404.3M791.86 363.5 L788.54 368.44 L785.28 373.44 L782.06 378.4 L778.84 383.42 L775.68 388.46 L772.74 393.58 L769.96 398.86 L768.7 404.66M797.42 363.5 L793.88 368.48 L790.36 373.48 L786.92 378.5 L783.48 383.54 L780.06 388.62 L776.88 393.76 L773.92 399.12 L772.4 405.02M802.98 363.5 L799.22 368.52 L795.44 373.52 L791.78 378.6 L788.12 383.66 L784.44 388.78 L781.02 393.94 L777.88 399.38 L776.1 405.38M808.54 363.5 L804.56 368.56 L800.52 373.56 L796.64 378.7 L792.76 383.78 L788.82 388.94 L785.16 394.12 L781.84 399.64 L779.8 405.74M814.1 363.5 L809.9 368.6 L805.6 373.6 L801.5 378.8 L797.4 383.9 L793.2 389.1 L789.3 394.3 L785.8 399.9 L783.5 406.1M765 403.4 L785.4 403.4M768.2 411.5 L789.3 411.3M772.6 419.1 L794.2 418.7M776.7 426.8 L798.3 426.5M780.3 434.7 L800.5 435M783.4 442.9 L801.1 443.8M786.2 451.2 L801.1 452.7M788.7 459.6 L801.9 461.5M790 468.2 L803.9 470.1M765 403.4 L768.2 411.5 L772.6 419.1 L776.7 426.8 L780.3 434.7 L783.4 442.9 L786.2 451.2 L788.7 459.6 L790 468.2M770.1 403.4 L773.475 411.45 L778 419 L782.1 426.725 L785.35 434.775 L787.825 443.125 L789.925 451.575 L792 460.075 L793.475 468.675M775.2 403.4 L778.75 411.4 L783.4 418.9 L787.5 426.65 L790.4 434.85 L792.25 443.35 L793.65 451.95 L795.3 460.55 L796.95 469.15M780.3 403.4 L784.025 411.35 L788.8 418.8 L792.9 426.575 L795.45 434.925 L796.675 443.575 L797.375 452.325 L798.6 461.025 L800.425 469.625M785.4 403.4 L789.3 411.3 L794.2 418.7 L798.3 426.5 L800.5 435 L801.1 443.8 L801.1 452.7 L801.9 461.5 L803.9 470.1M790 468.2 L803.9 470.1M784.6 473.6 L806.1 474.6M778.5 478.2 L808.1 479.1M772.3 482.5 L809.7 483.9M767.8 488.6 L811.3 488.6M790 468.2 L784.6 473.6 L778.5 478.2 L772.3 482.5 L767.8 488.6M792.78 468.58 L788.9 473.8 L784.42 478.38 L779.78 482.78 L776.5 488.6M795.56 468.96 L793.2 474 L790.34 478.56 L787.26 483.06 L785.2 488.6M798.34 469.34 L797.5 474.2 L796.26 478.74 L794.74 483.34 L793.9 488.6M801.12 469.72 L801.8 474.4 L802.18 478.92 L802.22 483.62 L802.6 488.6M803.9 470.1 L806.1 474.6 L808.1 479.1 L809.7 483.9 L811.3 488.6M786.3 363.5 L793.7 356.1 L814.1 355.2M793.7 356.1 L793.7 345M765 404.3 L767.8 409.8 L772.4 417.2 L776.1 424.6M783.5 406.1 L787.2 411.7 L792.8 419.1 L797.4 426.5M765.9 398.7 L773.3 406.1 L783.5 406.1M767.8 409.8 L787.2 411.7M759.4 269.8 L770.6 294.8M764.1 269.8 L777 305.9" style="stroke-width:0.9"/>
<path class="w" d="M876.7 270.3 L875.7 280.5 L879.4 296.3 L893.3 305.5M876.7 270.3 L887.8 287.9 L901.7 270.9M888.7 269.8 L899.8 279.6 L907.2 290.7 L907.2 308.3 L906.3 321.3 L903.5 326.8 L895.2 334.2 L885.9 340.7 L880 336.1 L880.4 315.7 L893.3 305.5M901.7 270.9 L899.8 279.6 L887.8 287.9 L879.4 296.3M875.7 280.5 L888.7 269.8 L887.8 287.9 L893.3 305.5 L907.2 290.7M876.7 270.3 L888.7 269.8 L901.7 270.9M893.3 305.5 L897 317.6 L906.3 321.3M880.4 315.7 L897 317.6 L885.9 340.7M893.3 305.5 L907.2 308.3 L897 317.6M893.3 305.5 L884.1 336.1 L895.2 334.2 L897 317.6M879.4 296.3 L880.4 315.7M880 336.1 L884.1 336.1" style="stroke:#2b2a86;stroke-width:0.9"/>
</svg>
<g opacity="0.999">
<text x="3.4" y="13" textLength="17.2" lengthAdjust="spacingAndGlyphs" class="m">View</text>
<text x="29.0" y="13" textLength="30.0" lengthAdjust="spacingAndGlyphs" class="m">Shading</text>
<text x="67.0" y="13" textLength="29.5" lengthAdjust="spacingAndGlyphs" class="m">Lighting</text>
<text x="105.0" y="13" textLength="20.6" lengthAdjust="spacingAndGlyphs" class="m">Show</text>
<text x="134.0" y="13" textLength="35.0" lengthAdjust="spacingAndGlyphs" class="m">Renderer</text>
<text x="177.6" y="13" textLength="24.4" lengthAdjust="spacingAndGlyphs" class="m">Panels</text>
<text x="497.0" y="13" textLength="17.2" lengthAdjust="spacingAndGlyphs" class="m">View</text>
<text x="522.6" y="13" textLength="30.0" lengthAdjust="spacingAndGlyphs" class="m">Shading</text>
<text x="560.6" y="13" textLength="29.5" lengthAdjust="spacingAndGlyphs" class="m">Lighting</text>
<text x="598.6" y="13" textLength="20.6" lengthAdjust="spacingAndGlyphs" class="m">Show</text>
<text x="627.6" y="13" textLength="35.0" lengthAdjust="spacingAndGlyphs" class="m">Renderer</text>
<text x="671.2" y="13" textLength="24.4" lengthAdjust="spacingAndGlyphs" class="m">Panels</text>
<text x="3.4" y="265" textLength="17.2" lengthAdjust="spacingAndGlyphs" class="m">View</text>
<text x="29.0" y="265" textLength="30.0" lengthAdjust="spacingAndGlyphs" class="m">Shading</text>
<text x="67.0" y="265" textLength="29.5" lengthAdjust="spacingAndGlyphs" class="m">Lighting</text>
<text x="105.0" y="265" textLength="20.6" lengthAdjust="spacingAndGlyphs" class="m">Show</text>
<text x="134.0" y="265" textLength="35.0" lengthAdjust="spacingAndGlyphs" class="m">Renderer</text>
<text x="177.6" y="265" textLength="24.4" lengthAdjust="spacingAndGlyphs" class="m">Panels</text>
<text x="497.0" y="265" textLength="17.2" lengthAdjust="spacingAndGlyphs" class="m">View</text>
<text x="522.6" y="265" textLength="30.0" lengthAdjust="spacingAndGlyphs" class="m">Shading</text>
<text x="560.6" y="265" textLength="29.5" lengthAdjust="spacingAndGlyphs" class="m">Lighting</text>
<text x="598.6" y="265" textLength="20.6" lengthAdjust="spacingAndGlyphs" class="m">Show</text>
<text x="627.6" y="265" textLength="35.0" lengthAdjust="spacingAndGlyphs" class="m">Renderer</text>
<text x="671.2" y="265" textLength="24.4" lengthAdjust="spacingAndGlyphs" class="m">Panels</text>
<text x="11.7" y="26" textLength="26.6" lengthAdjust="spacingAndGlyphs" class="hl">Verts:</text>
<text x="51.5" y="26" textLength="14.2" lengthAdjust="spacingAndGlyphs" class="hv">544</text>
<text x="91.3" y="26" textLength="14.2" lengthAdjust="spacingAndGlyphs" class="hv">544</text>
<text x="131.3" y="26" textLength="4.8" lengthAdjust="spacingAndGlyphs" class="hv">0</text>
<text x="11.7" y="42" textLength="29.6" lengthAdjust="spacingAndGlyphs" class="hl">Edges:</text>
<text x="51.5" y="42" textLength="19.0" lengthAdjust="spacingAndGlyphs" class="hv">1073</text>
<text x="91.3" y="42" textLength="19.0" lengthAdjust="spacingAndGlyphs" class="hv">1073</text>
<text x="131.3" y="42" textLength="4.8" lengthAdjust="spacingAndGlyphs" class="hv">0</text>
<text x="11.7" y="58" textLength="28.3" lengthAdjust="spacingAndGlyphs" class="hl">Faces:</text>
<text x="51.5" y="58" textLength="14.2" lengthAdjust="spacingAndGlyphs" class="hv">529</text>
<text x="91.3" y="58" textLength="14.2" lengthAdjust="spacingAndGlyphs" class="hv">529</text>
<text x="131.3" y="58" textLength="4.8" lengthAdjust="spacingAndGlyphs" class="hv">0</text>
<text x="11.7" y="74" textLength="19.4" lengthAdjust="spacingAndGlyphs" class="hl">Tris:</text>
<text x="51.5" y="74" textLength="19.0" lengthAdjust="spacingAndGlyphs" class="hv">1058</text>
<text x="91.3" y="74" textLength="19.0" lengthAdjust="spacingAndGlyphs" class="hv">1058</text>
<text x="131.3" y="74" textLength="4.8" lengthAdjust="spacingAndGlyphs" class="hv">0</text>
<text x="11.7" y="90" textLength="19.9" lengthAdjust="spacingAndGlyphs" class="hl">UVs:</text>
<text x="51.5" y="90" textLength="19.0" lengthAdjust="spacingAndGlyphs" class="hv">2116</text>
<text x="91.3" y="90" textLength="19.0" lengthAdjust="spacingAndGlyphs" class="hv">2116</text>
<text x="131.3" y="90" textLength="4.8" lengthAdjust="spacingAndGlyphs" class="hv">0</text>
<text x="505.3" y="26" textLength="26.6" lengthAdjust="spacingAndGlyphs" class="hl">Verts:</text>
<text x="545.1" y="26" textLength="14.2" lengthAdjust="spacingAndGlyphs" class="hv">544</text>
<text x="585.0" y="26" textLength="14.2" lengthAdjust="spacingAndGlyphs" class="hv">544</text>
<text x="625.0" y="26" textLength="4.8" lengthAdjust="spacingAndGlyphs" class="hv">0</text>
<text x="505.3" y="42" textLength="29.6" lengthAdjust="spacingAndGlyphs" class="hl">Edges:</text>
<text x="545.1" y="42" textLength="19.0" lengthAdjust="spacingAndGlyphs" class="hv">1073</text>
<text x="585.0" y="42" textLength="19.0" lengthAdjust="spacingAndGlyphs" class="hv">1073</text>
<text x="625.0" y="42" textLength="4.8" lengthAdjust="spacingAndGlyphs" class="hv">0</text>
<text x="505.3" y="58" textLength="28.3" lengthAdjust="spacingAndGlyphs" class="hl">Faces:</text>
<text x="545.1" y="58" textLength="14.2" lengthAdjust="spacingAndGlyphs" class="hv">529</text>
<text x="585.0" y="58" textLength="14.2" lengthAdjust="spacingAndGlyphs" class="hv">529</text>
<text x="625.0" y="58" textLength="4.8" lengthAdjust="spacingAndGlyphs" class="hv">0</text>
<text x="505.3" y="74" textLength="19.4" lengthAdjust="spacingAndGlyphs" class="hl">Tris:</text>
<text x="545.1" y="74" textLength="19.0" lengthAdjust="spacingAndGlyphs" class="hv">1058</text>
<text x="585.0" y="74" textLength="19.0" lengthAdjust="spacingAndGlyphs" class="hv">1058</text>
<text x="625.0" y="74" textLength="4.8" lengthAdjust="spacingAndGlyphs" class="hv">0</text>
<text x="505.3" y="90" textLength="19.9" lengthAdjust="spacingAndGlyphs" class="hl">UVs:</text>
<text x="545.1" y="90" textLength="19.0" lengthAdjust="spacingAndGlyphs" class="hv">2116</text>
<text x="585.0" y="90" textLength="19.0" lengthAdjust="spacingAndGlyphs" class="hv">2116</text>
<text x="625.0" y="90" textLength="4.8" lengthAdjust="spacingAndGlyphs" class="hv">0</text>
<text x="11.7" y="276.4" textLength="26.6" lengthAdjust="spacingAndGlyphs" class="hl">Verts:</text>
<text x="52.3" y="276.4" textLength="19.0" lengthAdjust="spacingAndGlyphs" class="hv">8524</text>
<text x="93.0" y="276.4" textLength="19.0" lengthAdjust="spacingAndGlyphs" class="hv">8524</text>
<text x="133.8" y="276.4" textLength="4.8" lengthAdjust="spacingAndGlyphs" class="hv">0</text>
<text x="11.7" y="291.9" textLength="29.6" lengthAdjust="spacingAndGlyphs" class="hl">Edges:</text>
<text x="52.3" y="291.9" textLength="23.8" lengthAdjust="spacingAndGlyphs" class="hv">16988</text>
<text x="93.0" y="291.9" textLength="23.8" lengthAdjust="spacingAndGlyphs" class="hv">16988</text>
<text x="133.8" y="291.9" textLength="4.8" lengthAdjust="spacingAndGlyphs" class="hv">0</text>
<text x="11.7" y="307.4" textLength="28.3" lengthAdjust="spacingAndGlyphs" class="hl">Faces:</text>
<text x="52.3" y="307.4" textLength="19.0" lengthAdjust="spacingAndGlyphs" class="hv">8464</text>
<text x="93.0" y="307.4" textLength="19.0" lengthAdjust="spacingAndGlyphs" class="hv">8464</text>
<text x="133.8" y="307.4" textLength="4.8" lengthAdjust="spacingAndGlyphs" class="hv">0</text>
<text x="11.7" y="322.9" textLength="19.4" lengthAdjust="spacingAndGlyphs" class="hl">Tris:</text>
<text x="52.3" y="322.9" textLength="23.8" lengthAdjust="spacingAndGlyphs" class="hv">16928</text>
<text x="93.0" y="322.9" textLength="23.8" lengthAdjust="spacingAndGlyphs" class="hv">16928</text>
<text x="133.8" y="322.9" textLength="4.8" lengthAdjust="spacingAndGlyphs" class="hv">0</text>
<text x="11.7" y="338.4" textLength="19.9" lengthAdjust="spacingAndGlyphs" class="hl">UVs:</text>
<text x="52.3" y="338.4" textLength="23.8" lengthAdjust="spacingAndGlyphs" class="hv">13225</text>
<text x="93.0" y="338.4" textLength="23.8" lengthAdjust="spacingAndGlyphs" class="hv">13225</text>
<text x="133.8" y="338.4" textLength="4.8" lengthAdjust="spacingAndGlyphs" class="hv">0</text>
<text x="504.9" y="278" textLength="26.6" lengthAdjust="spacingAndGlyphs" class="hl">Verts:</text>
<text x="544.7" y="278" textLength="14.2" lengthAdjust="spacingAndGlyphs" class="hv">572</text>
<text x="585.0" y="278" textLength="14.2" lengthAdjust="spacingAndGlyphs" class="hv">544</text>
<text x="625.0" y="278" textLength="4.8" lengthAdjust="spacingAndGlyphs" class="hv">0</text>
<text x="504.9" y="294" textLength="29.6" lengthAdjust="spacingAndGlyphs" class="hl">Edges:</text>
<text x="544.7" y="294" textLength="19.0" lengthAdjust="spacingAndGlyphs" class="hv">1125</text>
<text x="585.0" y="294" textLength="19.0" lengthAdjust="spacingAndGlyphs" class="hv">1073</text>
<text x="625.0" y="294" textLength="4.8" lengthAdjust="spacingAndGlyphs" class="hv">0</text>
<text x="504.9" y="310" textLength="28.3" lengthAdjust="spacingAndGlyphs" class="hl">Faces:</text>
<text x="544.7" y="310" textLength="14.2" lengthAdjust="spacingAndGlyphs" class="hv">554</text>
<text x="585.0" y="310" textLength="14.2" lengthAdjust="spacingAndGlyphs" class="hv">529</text>
<text x="625.0" y="310" textLength="4.8" lengthAdjust="spacingAndGlyphs" class="hv">0</text>
<text x="504.9" y="326" textLength="19.4" lengthAdjust="spacingAndGlyphs" class="hl">Tris:</text>
<text x="544.7" y="326" textLength="19.0" lengthAdjust="spacingAndGlyphs" class="hv">1108</text>
<text x="585.0" y="326" textLength="19.0" lengthAdjust="spacingAndGlyphs" class="hv">1058</text>
<text x="625.0" y="326" textLength="4.8" lengthAdjust="spacingAndGlyphs" class="hv">0</text>
<text x="504.9" y="342" textLength="19.9" lengthAdjust="spacingAndGlyphs" class="hl">UVs:</text>
<text x="544.7" y="342" textLength="19.0" lengthAdjust="spacingAndGlyphs" class="hv">2216</text>
<text x="585.0" y="342" textLength="19.0" lengthAdjust="spacingAndGlyphs" class="hv">2116</text>
<text x="625.0" y="342" textLength="4.8" lengthAdjust="spacingAndGlyphs" class="hv">0</text>
<text x="229.7" y="235.5" textLength="14" lengthAdjust="spacingAndGlyphs" class="vl">top</text>
<text x="713" y="236" textLength="25" lengthAdjust="spacingAndGlyphs" class="vl">persp</text>
<text x="222" y="479" textLength="26" lengthAdjust="spacingAndGlyphs" class="vl">persp</text>
<text x="716" y="480" textLength="19" lengthAdjust="spacingAndGlyphs" class="vl">side</text>
<line x1="19.5" y1="223.2" x2="30.5" y2="223.2" stroke="#d83030" stroke-width="1.2"/>
<line x1="19.5" y1="223.2" x2="19.5" y2="226" stroke="#2222c8" stroke-width="1.2"/>
<text x="17" y="221.5" class="ax" fill="#2fd62f">y</text>
<text x="29.5" y="220.5" class="ax" fill="#e02a2a">x</text>
<text x="17" y="233" class="ax" fill="#1414c8">z</text>
<line x1="512.7" y1="223.4" x2="512.7" y2="205" stroke="#3fd23f" stroke-width="1.2"/><line x1="512.7" y1="223.4" x2="504.5" y2="225" stroke="#2222c8" stroke-width="1.2"/><line x1="512.7" y1="223.4" x2="519.3" y2="225.5" stroke="#d83030" stroke-width="1.2"/><text x="500" y="221.7" class="ax" fill="#1414c8">z</text><text x="518" y="222.6" class="ax" fill="#e02a2a">x</text><text x="511.8" y="207.5" class="ax" fill="#2fd62f">y</text>
<line x1="20.2" y1="466.3" x2="20.2" y2="449" stroke="#3fd23f" stroke-width="1.2"/><line x1="20.2" y1="466.3" x2="11" y2="468.4" stroke="#2222c8" stroke-width="1.2"/><line x1="20.2" y1="466.3" x2="26.3" y2="468.8" stroke="#d83030" stroke-width="1.2"/><text x="7" y="465" class="ax" fill="#1414c8">z</text><text x="24.7" y="466" class="ax" fill="#e02a2a">x</text><text x="17.5" y="452" class="ax" fill="#2fd62f">y</text>
<line x1="513.8" y1="466.7" x2="513.8" y2="450" stroke="#3fd23f" stroke-width="1.2"/>
<line x1="513.8" y1="466.9" x2="501.9" y2="466.9" stroke="#2222c8" stroke-width="1.3"/>
<text x="511.3" y="452" class="ax" fill="#2fd62f">y</text>
<text x="498.6" y="464.7" class="ax" fill="#1414c8">z</text>
<text x="511" y="464.5" class="ax" fill="#d0602a">x</text>
</g>
</svg>
</body></html>
